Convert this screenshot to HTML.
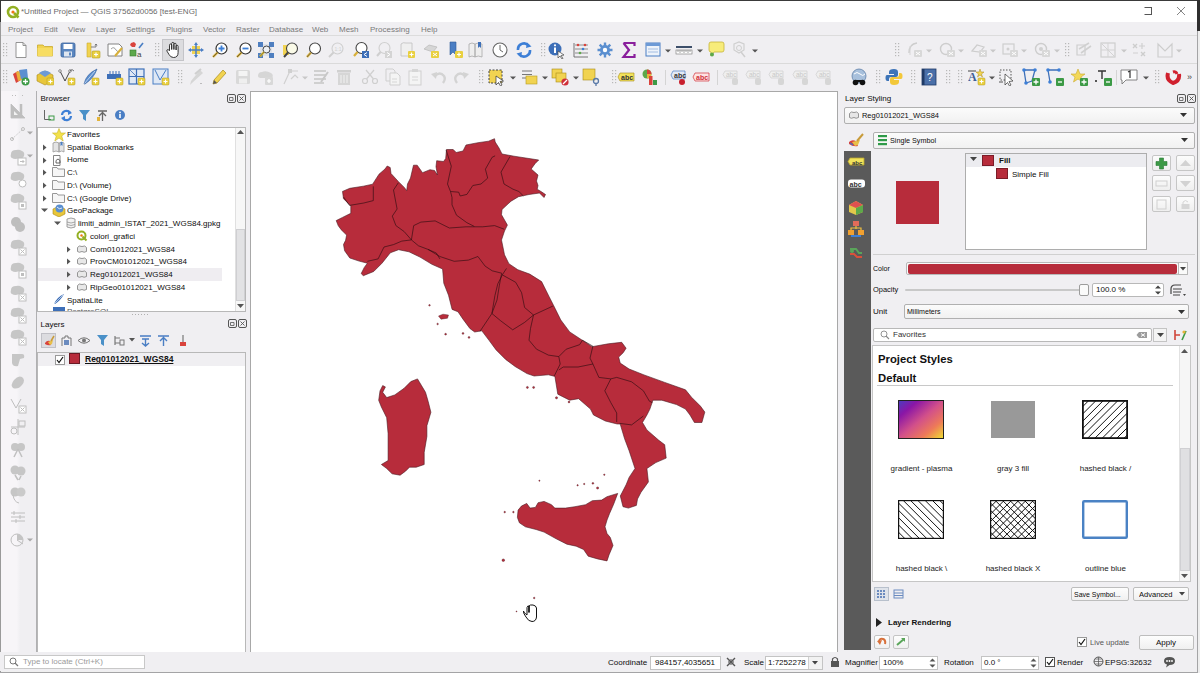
<!DOCTYPE html>
<html><head><meta charset="utf-8"><style>
*{margin:0;padding:0}
html,body{width:1200px;height:673px;overflow:hidden;background:#f0f0f0;position:relative}
body>div,body>svg{position:absolute}
.t{position:absolute;white-space:nowrap;line-height:12px;font-family:"Liberation Sans", sans-serif}
</style></head><body>
<div style="left:0px;top:0px;width:1200px;height:1px;background:#3a3a3a"></div>
<div style="left:0px;top:1px;width:1200px;height:21px;background:#ffffff"></div>
<svg style="position:absolute;left:6px;top:5px;" width="14" height="14" viewBox="0 0 14 14"><circle cx="7" cy="7" r="5" fill="none" stroke="#93b023" stroke-width="2.6"/><path d="M8 8 L12.5 12.5" stroke="#93b023" stroke-width="2.6"/><circle cx="7" cy="7" r="1.6" fill="#ee7913"/></svg>
<div class="t" style="left:21px;top:5.61px;font-size:8.0px;color:#6a6a6a;">*Untitled Project — QGIS 37562d0056 [test-ENG]</div>
<div style="left:1144px;top:7px;width:8px;height:8px;border:1px solid #555;box-sizing:border-box;border-left-color:#fff;width:8px"></div>
<svg style="position:absolute;left:1176px;top:6px;" width="10" height="10" viewBox="0 0 10 10"><path d="M1 1L9 9M9 1L1 9" stroke="#666" stroke-width="0.8"/></svg>
<div style="left:0px;top:22px;width:1200px;height:13px;background:#f0eff2"></div>
<div class="t" style="left:8px;top:23.51px;font-size:8.0px;color:#7a7a7a;">Project</div>
<div class="t" style="left:44px;top:23.51px;font-size:8.0px;color:#7a7a7a;">Edit</div>
<div class="t" style="left:68px;top:23.51px;font-size:8.0px;color:#7a7a7a;">View</div>
<div class="t" style="left:96px;top:23.51px;font-size:8.0px;color:#7a7a7a;">Layer</div>
<div class="t" style="left:126px;top:23.51px;font-size:8.0px;color:#7a7a7a;">Settings</div>
<div class="t" style="left:166px;top:23.51px;font-size:8.0px;color:#7a7a7a;">Plugins</div>
<div class="t" style="left:203px;top:23.51px;font-size:8.0px;color:#7a7a7a;">Vector</div>
<div class="t" style="left:236px;top:23.51px;font-size:8.0px;color:#7a7a7a;">Raster</div>
<div class="t" style="left:269px;top:23.51px;font-size:8.0px;color:#7a7a7a;">Database</div>
<div class="t" style="left:312px;top:23.51px;font-size:8.0px;color:#7a7a7a;">Web</div>
<div class="t" style="left:339px;top:23.51px;font-size:8.0px;color:#7a7a7a;">Mesh</div>
<div class="t" style="left:370px;top:23.51px;font-size:8.0px;color:#7a7a7a;">Processing</div>
<div class="t" style="left:421px;top:23.51px;font-size:8.0px;color:#7a7a7a;">Help</div>
<div style="left:0px;top:35px;width:1200px;height:1px;background:#dcdcdc"></div>
<div style="left:0px;top:36px;width:1200px;height:27px;background:#f0eff2"></div>
<div style="left:0px;top:63px;width:1200px;height:1px;background:#dadada"></div>
<div style="left:0px;top:64px;width:1200px;height:25px;background:#f0eff2"></div>
<div style="left:162px;top:39px;width:22px;height:22px;background:#dcdcdf;border:1px solid #c4c4c8;box-sizing:border-box"></div>
<svg style="position:absolute;left:12px;top:41px;" width="18" height="18" viewBox="0 0 18 18"><path d="M4 1.5H11L14 4.5V16.5H4Z" fill="#fff" stroke="#888" stroke-width="0.9"/><path d="M11 1.5V4.5H14" fill="none" stroke="#888" stroke-width="0.9"/></svg>
<svg style="position:absolute;left:36px;top:41px;" width="18" height="18" viewBox="0 0 18 18"><path d="M1.5 4H7L8.5 5.5H16.5V15H1.5Z" fill="#f1d351" stroke="#c9a92c" stroke-width="0.8"/><path d="M1.5 7H16.5V15H1.5Z" fill="#f7dd63"/></svg>
<svg style="position:absolute;left:59px;top:41px;" width="18" height="18" viewBox="0 0 18 18"><rect x="2" y="2" width="14" height="14" rx="1.5" fill="#5a86c0" stroke="#37619a" stroke-width="0.8"/><rect x="4.5" y="3" width="9" height="5" fill="#fff"/><rect x="5" y="10.5" width="8" height="5" fill="#dfe6f0"/><rect x="10" y="11.5" width="2" height="3" fill="#5a86c0"/></svg>
<svg style="position:absolute;left:84px;top:41px;" width="18" height="18" viewBox="0 0 18 18"><path d="M3 2H7V16H3Z" fill="#f1d351" stroke="#c9a92c" stroke-width="0.6"/><path d="M7 6H12V3M12 3L11 4.5M12 3L13 4.5" stroke="#666" fill="none" stroke-width="0.8"/><rect x="8" y="10" width="8" height="7" rx="1" fill="#e9d040" stroke="#b49a20" stroke-width="0.6"/><path d="M10 13.5H14M12 11.5V15.5" stroke="#fff" stroke-width="1.2"/></svg>
<svg style="position:absolute;left:106px;top:41px;" width="18" height="18" viewBox="0 0 18 18"><path d="M2 3H13L16 6V15H2Z" fill="#fff" stroke="#777" stroke-width="0.9"/><path d="M5 8Q8 5 10 9Q12 12 14 10" stroke="#888" fill="none" stroke-width="0.8"/><path d="M9 15L16 7" stroke="#d8b03a" stroke-width="2"/></svg>
<svg style="position:absolute;left:127px;top:41px;" width="18" height="18" viewBox="0 0 18 18"><path d="M4 2L7 1L9 3L8 6L5 6L3 4Z" fill="#d9433c"/><path d="M12 7L16 2" stroke="#4a7ec4" stroke-width="1.6"/><rect x="3" y="9" width="6" height="6" fill="#5da84a" stroke="#3a7a30" stroke-width="0.6"/><text x="10" y="16" font-size="8" font-family="Liberation Sans" fill="#444">a</text></svg>
<svg style="position:absolute;left:164px;top:41px;" width="18" height="18" viewBox="0 0 18 18"><path d="M5.5 9.5V4.2Q5.5 3 6.6 3Q7.7 3 7.7 4.2V8.5V2.6Q7.7 1.4 8.8 1.4Q9.9 1.4 9.9 2.6V8.5V3.4Q9.9 2.2 11 2.2Q12.1 2.2 12.1 3.4V9V5.4Q12.1 4.3 13.1 4.3Q14.1 4.3 14.1 5.4V11.5Q14.1 16.5 9.5 16.5Q6.5 16.5 5 13.5L3 10.2Q2.4 8.8 3.8 8.6Q4.7 8.5 5.5 9.8Z" fill="#fff" stroke="#222" stroke-width="0.9" stroke-linejoin="round"/></svg>
<svg style="position:absolute;left:187px;top:41px;" width="18" height="18" viewBox="0 0 18 18"><rect x="5" y="5" width="8" height="8" fill="#f1d351"/><path d="M9 1L11 4H7Z M9 17L11 14H7Z M1 9L4 7V11Z M17 9L14 7V11Z" fill="#4a7ec4"/><path d="M9 4V14M4 9H14" stroke="#4a7ec4" stroke-width="1.5"/></svg>
<svg style="position:absolute;left:211px;top:41px;" width="18" height="18" viewBox="0 0 18 18"><circle cx="10.5" cy="7.5" r="5.5" fill="#fff" stroke="#333" stroke-width="1.2"/><path d="M7.5 7.5H13.5M10.5 4.5V10.5" stroke="#3d7fd6" stroke-width="1.8"/><path d="M6.5 11.5L2 16" stroke="#d8b03a" stroke-width="2.4"/><path d="M6.5 11.5L2 16" stroke="#333" stroke-width="0.6"/></svg>
<svg style="position:absolute;left:235px;top:41px;" width="18" height="18" viewBox="0 0 18 18"><circle cx="10.5" cy="7.5" r="5.5" fill="#fff" stroke="#333" stroke-width="1.2"/><path d="M7.5 7.5H13.5" stroke="#3d7fd6" stroke-width="1.8"/><path d="M6.5 11.5L2 16" stroke="#d8b03a" stroke-width="2.4"/><path d="M6.5 11.5L2 16" stroke="#333" stroke-width="0.6"/></svg>
<svg style="position:absolute;left:257px;top:41px;" width="18" height="18" viewBox="0 0 18 18"><rect x="3" y="3" width="12" height="12" fill="#dfe3ea"/><path d="M1 1H6V6H1Z M12 1H17V6H12Z M1 12H6V17H1Z M12 12H17V17H12Z" fill="#4f7fc0"/><circle cx="9.5" cy="8.5" r="3.5" fill="#eef1f5" stroke="#333" stroke-width="0.9"/><path d="M7 11L3 15.5" stroke="#e3c23a" stroke-width="2.2"/><path d="M7 11L3 15.5" stroke="#333" stroke-width="0.5"/></svg>
<svg style="position:absolute;left:281px;top:41px;" width="18" height="18" viewBox="0 0 18 18"><rect x="2" y="4" width="6" height="10" fill="#f1d351"/><circle cx="11" cy="7.5" r="5.5" fill="#fafae8" stroke="#444" stroke-width="1.1"/><path d="M7 11.5L3 16" stroke="#444" stroke-width="2"/></svg>
<svg style="position:absolute;left:304px;top:41px;" width="18" height="18" viewBox="0 0 18 18"><circle cx="11" cy="7.5" r="5.5" fill="#fff" stroke="#444" stroke-width="1.1"/><path d="M7 11.5L3 16" stroke="#d8b03a" stroke-width="2.4"/><path d="M7 11.5L3 16" stroke="#444" stroke-width="0.6"/></svg>
<svg style="position:absolute;left:327px;top:41px;" width="18" height="18" viewBox="0 0 18 18"><circle cx="10.5" cy="7.5" r="5.5" fill="none" stroke="#cfcfcf" stroke-width="1.1"/><path d="M6.5 11.5L2 16" stroke="#cfcfcf" stroke-width="2"/><text x="7.5" y="10" font-size="5" fill="#cfcfcf" font-family="Liberation Sans">1:1</text></svg>
<svg style="position:absolute;left:352px;top:41px;" width="18" height="18" viewBox="0 0 18 18"><circle cx="9.5" cy="7" r="5.5" fill="#fff" stroke="#444" stroke-width="1.1"/><path d="M5.5 11L2 15" stroke="#d8b03a" stroke-width="2.2"/><rect x="10" y="10" width="7" height="7" fill="#3d6fb8"/><path d="M15 11.5L12 13.5L15 15.5" stroke="#fff" fill="none"/></svg>
<svg style="position:absolute;left:375px;top:41px;" width="18" height="18" viewBox="0 0 18 18"><circle cx="9.5" cy="7" r="5.5" fill="none" stroke="#cfcfcf" stroke-width="1.1"/><path d="M5.5 11L2 15" stroke="#cfcfcf" stroke-width="2"/><rect x="10" y="10" width="7" height="7" fill="#d4d4d4"/><path d="M12 11.5L15 13.5L12 15.5" stroke="#fff" fill="none"/></svg>
<svg style="position:absolute;left:398px;top:41px;" width="18" height="18" viewBox="0 0 18 18"><path d="M3 3Q5 1 8 2L14 2V15H3Z" fill="#efefef" stroke="#c4c4c4" stroke-width="0.9"/><rect x="10" y="10" width="7" height="7" rx="1" fill="#e9d040"/><path d="M11.5 13.5H15.5M13.5 11.5V15.5" stroke="#fff" stroke-width="1.2"/></svg>
<svg style="position:absolute;left:422px;top:41px;" width="18" height="18" viewBox="0 0 18 18"><path d="M2 8L7 4L15 6L11 11Z" fill="#d6d6d6" stroke="#bdbdbd" stroke-width="0.8"/><rect x="9" y="10" width="8" height="7" rx="1" fill="#e9d040"/><path d="M11 12L13 13.5L11 15M15 12L13 13.5L15 15" stroke="#fff" fill="none"/></svg>
<svg style="position:absolute;left:446px;top:41px;" width="18" height="18" viewBox="0 0 18 18"><path d="M4 1H10V14L7 11L4 14Z" fill="#4a7ec4"/><path d="M4 1H10V14L7 11L4 14Z" fill="none" stroke="#2f5a99" stroke-width="0.6"/><rect x="9" y="10" width="8" height="7" rx="1" fill="#e9d040"/><path d="M11 13.5H15M13 11.5V15.5" stroke="#fff" stroke-width="1.2"/></svg>
<svg style="position:absolute;left:467px;top:41px;" width="18" height="18" viewBox="0 0 18 18"><path d="M2 3Q5 1 8 3V16Q5 14 2 16Z M8 3Q11 1 15 3V16Q11 14 8 16Z" fill="#eeeeee" stroke="#a8a8a8" stroke-width="0.8"/><path d="M11 1V7L12.5 5.5L14 7V1Z" fill="#3d6fb8"/></svg>
<svg style="position:absolute;left:491px;top:41px;" width="18" height="18" viewBox="0 0 18 18"><circle cx="9" cy="9" r="7" fill="#fff" stroke="#666" stroke-width="1.1"/><path d="M9 4V9L12 11" stroke="#666" stroke-width="1" fill="none"/></svg>
<svg style="position:absolute;left:515px;top:41px;" width="18" height="18" viewBox="0 0 18 18"><path d="M3 9A6 6 0 0 1 13.5 4.5" stroke="#3d7fd6" stroke-width="2.6" fill="none"/><path d="M15 9A6 6 0 0 1 4.5 13.5" stroke="#3d7fd6" stroke-width="2.6" fill="none"/><path d="M12 1.5L16.5 5.5L11 7Z M6 16.5L1.5 12.5L7 11Z" fill="#3d7fd6"/></svg>
<svg style="position:absolute;left:547px;top:41px;" width="18" height="18" viewBox="0 0 18 18"><circle cx="8" cy="8" r="6.5" fill="#3d6fb8"/><rect x="7" y="6.5" width="2" height="5.5" fill="#fff"/><circle cx="8" cy="4.3" r="1.1" fill="#fff"/><path d="M11 10L11 17L13 15L15 18L16 17.5L14 14.5L17 14Z" fill="#fff" stroke="#444" stroke-width="0.7"/></svg>
<svg style="position:absolute;left:572px;top:41px;" width="18" height="18" viewBox="0 0 18 18"><path d="M2 2V16H16" stroke="#666" fill="none" stroke-width="0.9"/><path d="M3 4H16M3 8H16M3 12H16" stroke="#777" stroke-width="0.8"/><circle cx="6" cy="4" r="1.3" fill="#d9433c"/><circle cx="11" cy="8" r="1.3" fill="#3d7fd6"/><circle cx="8" cy="12" r="1.3" fill="#5da84a"/><circle cx="13" cy="4" r="1.3" fill="#d9433c"/></svg>
<svg style="position:absolute;left:596px;top:41px;" width="18" height="18" viewBox="0 0 18 18"><circle cx="9" cy="9" r="5" fill="#5b8fd0"/><path d="M9 1.5V16.5M1.5 9H16.5M3.7 3.7L14.3 14.3M14.3 3.7L3.7 14.3" stroke="#5b8fd0" stroke-width="2.4"/><circle cx="9" cy="9" r="2.2" fill="#fff"/></svg>
<svg style="position:absolute;left:620px;top:41px;" width="18" height="18" viewBox="0 0 18 18"><path d="M3.5 2H14.5V5M3.5 2L9 9L3.5 16H14.5V13" stroke="#8a1f9c" stroke-width="2.2" fill="none"/></svg>
<svg style="position:absolute;left:644px;top:41px;" width="18" height="18" viewBox="0 0 18 18"><rect x="2" y="2" width="14" height="13" fill="#eef3fa" stroke="#4a7ec4" stroke-width="1"/><rect x="2" y="2" width="14" height="3" fill="#6d9ad6"/><path d="M4 8H14M4 11H14" stroke="#9ab8e0" stroke-width="0.9"/></svg>
<svg style="position:absolute;left:675px;top:41px;" width="18" height="18" viewBox="0 0 18 18"><rect x="1" y="5" width="16" height="2" fill="#3d4f6a"/><rect x="1" y="9" width="16" height="4" fill="#fff" stroke="#888" stroke-width="0.7"/><path d="M3 9V11M5 9V12M7 9V11M9 9V12M11 9V11M13 9V12M15 9V11" stroke="#666" stroke-width="0.6"/></svg>
<svg style="position:absolute;left:707px;top:41px;" width="18" height="18" viewBox="0 0 18 18"><path d="M2 3Q2 1 4 1H15Q17 1 17 3V9Q17 11 15 11H7L4 15V11H4Q2 11 2 9Z" fill="#f7ec7a" stroke="#c7b53a" stroke-width="0.8"/><circle cx="5" cy="13.5" r="2" fill="#5da84a"/></svg>
<svg style="position:absolute;left:730px;top:41px;" width="18" height="18" viewBox="0 0 18 18"><path d="M4 3L9 1L14 3L14 9L9 12L4 9Z" fill="none" stroke="#cfcfcf" stroke-width="1.2"/><circle cx="9" cy="7" r="2.5" fill="none" stroke="#cfcfcf"/><path d="M11 11L15 16" stroke="#cfcfcf" stroke-width="1.5"/></svg>
<svg style="position:absolute;left:906px;top:41px;" width="18" height="18" viewBox="0 0 18 18"><path d="M3 12Q3 3 11 2" stroke="#cdcdcd" stroke-width="1.4" fill="none"/><path d="M4 14V5" stroke="#d5d5d5"/><rect x="8" y="9" width="8" height="7" rx="1" fill="#d8d8d8"/><path d="M10 11L14 14M14 11L10 14" stroke="#fff"/></svg>
<svg style="position:absolute;left:938px;top:41px;" width="18" height="18" viewBox="0 0 18 18"><circle cx="8" cy="8" r="5.5" fill="none" stroke="#cdcdcd" stroke-width="1.4"/><rect x="9" y="9" width="8" height="7" rx="1" fill="#d8d8d8"/><path d="M11 11L15 14M15 11L11 14" stroke="#fff"/></svg>
<svg style="position:absolute;left:970px;top:41px;" width="18" height="18" viewBox="0 0 18 18"><path d="M2 10L7 4L14 6L10 11Z" fill="none" stroke="#cdcdcd" stroke-width="1.2"/><rect x="9" y="9" width="8" height="7" rx="1" fill="#d8d8d8"/><path d="M11 11L15 14M15 11L11 14" stroke="#fff"/></svg>
<svg style="position:absolute;left:1001px;top:41px;" width="18" height="18" viewBox="0 0 18 18"><rect x="2" y="3" width="11" height="10" fill="none" stroke="#cdcdcd" stroke-width="1.2"/><circle cx="7" cy="8" r="1.5" fill="#d0d0d0"/><rect x="9" y="9" width="8" height="7" rx="1" fill="#d8d8d8"/><path d="M11 11L15 14M15 11L11 14" stroke="#fff"/></svg>
<svg style="position:absolute;left:1033px;top:41px;" width="18" height="18" viewBox="0 0 18 18"><circle cx="8" cy="8" r="5.5" fill="none" stroke="#cdcdcd" stroke-width="1.4"/><circle cx="8" cy="8" r="2" fill="#d0d0d0"/><rect x="9" y="9" width="8" height="7" rx="1" fill="#d8d8d8"/><path d="M11 11L15 14M15 11L11 14" stroke="#fff"/></svg>
<svg style="position:absolute;left:1075px;top:41px;" width="18" height="18" viewBox="0 0 18 18"><path d="M2 4H10V14H2Z" fill="none" stroke="#cdcdcd" stroke-width="1.2"/><path d="M4 8L14 2M6 12L16 5" stroke="#d0d0d0" stroke-width="1.6"/></svg>
<svg style="position:absolute;left:1099px;top:41px;" width="18" height="18" viewBox="0 0 18 18"><rect x="2" y="2" width="14" height="14" fill="none" stroke="#cdcdcd" stroke-width="1.2"/><path d="M2 9H16M9 2V16M2 2L16 16" stroke="#d3d3d3"/></svg>
<svg style="position:absolute;left:1130px;top:41px;" width="18" height="18" viewBox="0 0 18 18"><path d="M3 3L7 7M7 3L3 7M11 11L15 15M15 11L11 15" stroke="#cdcdcd" stroke-width="1.4"/><path d="M12 2V8M9 5H15M3 12H8" stroke="#d0d0d0" stroke-width="1.2"/></svg>
<svg style="position:absolute;left:1156px;top:41px;" width="18" height="18" viewBox="0 0 18 18"><path d="M2 16V3L9 10L16 3V16Z" fill="none" stroke="#cdcdcd" stroke-width="1.2"/></svg>
<svg style="position:absolute;left:3px;top:43px;" width="6" height="15" viewBox="0 0 6 15"><rect x="0" y="0" width="1.2" height="1.2" fill="#b8b8b8"/><rect x="0" y="3" width="1.2" height="1.2" fill="#b8b8b8"/><rect x="0" y="6" width="1.2" height="1.2" fill="#b8b8b8"/><rect x="0" y="9" width="1.2" height="1.2" fill="#b8b8b8"/><rect x="0" y="12" width="1.2" height="1.2" fill="#b8b8b8"/><rect x="3" y="0" width="1.2" height="1.2" fill="#b8b8b8"/><rect x="3" y="3" width="1.2" height="1.2" fill="#b8b8b8"/><rect x="3" y="6" width="1.2" height="1.2" fill="#b8b8b8"/><rect x="3" y="9" width="1.2" height="1.2" fill="#b8b8b8"/><rect x="3" y="12" width="1.2" height="1.2" fill="#b8b8b8"/></svg>
<svg style="position:absolute;left:155px;top:43px;" width="6" height="15" viewBox="0 0 6 15"><rect x="0" y="0" width="1.2" height="1.2" fill="#b8b8b8"/><rect x="0" y="3" width="1.2" height="1.2" fill="#b8b8b8"/><rect x="0" y="6" width="1.2" height="1.2" fill="#b8b8b8"/><rect x="0" y="9" width="1.2" height="1.2" fill="#b8b8b8"/><rect x="0" y="12" width="1.2" height="1.2" fill="#b8b8b8"/><rect x="3" y="0" width="1.2" height="1.2" fill="#b8b8b8"/><rect x="3" y="3" width="1.2" height="1.2" fill="#b8b8b8"/><rect x="3" y="6" width="1.2" height="1.2" fill="#b8b8b8"/><rect x="3" y="9" width="1.2" height="1.2" fill="#b8b8b8"/><rect x="3" y="12" width="1.2" height="1.2" fill="#b8b8b8"/></svg>
<svg style="position:absolute;left:540.5px;top:43px;" width="6" height="15" viewBox="0 0 6 15"><rect x="0" y="0" width="1.2" height="1.2" fill="#b8b8b8"/><rect x="0" y="3" width="1.2" height="1.2" fill="#b8b8b8"/><rect x="0" y="6" width="1.2" height="1.2" fill="#b8b8b8"/><rect x="0" y="9" width="1.2" height="1.2" fill="#b8b8b8"/><rect x="0" y="12" width="1.2" height="1.2" fill="#b8b8b8"/><rect x="3" y="0" width="1.2" height="1.2" fill="#b8b8b8"/><rect x="3" y="3" width="1.2" height="1.2" fill="#b8b8b8"/><rect x="3" y="6" width="1.2" height="1.2" fill="#b8b8b8"/><rect x="3" y="9" width="1.2" height="1.2" fill="#b8b8b8"/><rect x="3" y="12" width="1.2" height="1.2" fill="#b8b8b8"/></svg>
<svg style="position:absolute;left:894.5px;top:43px;" width="6" height="15" viewBox="0 0 6 15"><rect x="0" y="0" width="1.2" height="1.2" fill="#b8b8b8"/><rect x="0" y="3" width="1.2" height="1.2" fill="#b8b8b8"/><rect x="0" y="6" width="1.2" height="1.2" fill="#b8b8b8"/><rect x="0" y="9" width="1.2" height="1.2" fill="#b8b8b8"/><rect x="0" y="12" width="1.2" height="1.2" fill="#b8b8b8"/><rect x="3" y="0" width="1.2" height="1.2" fill="#b8b8b8"/><rect x="3" y="3" width="1.2" height="1.2" fill="#b8b8b8"/><rect x="3" y="6" width="1.2" height="1.2" fill="#b8b8b8"/><rect x="3" y="9" width="1.2" height="1.2" fill="#b8b8b8"/><rect x="3" y="12" width="1.2" height="1.2" fill="#b8b8b8"/></svg>
<svg style="position:absolute;left:1065px;top:43px;" width="6" height="15" viewBox="0 0 6 15"><rect x="0" y="0" width="1.2" height="1.2" fill="#b8b8b8"/><rect x="0" y="3" width="1.2" height="1.2" fill="#b8b8b8"/><rect x="0" y="6" width="1.2" height="1.2" fill="#b8b8b8"/><rect x="0" y="9" width="1.2" height="1.2" fill="#b8b8b8"/><rect x="0" y="12" width="1.2" height="1.2" fill="#b8b8b8"/><rect x="3" y="0" width="1.2" height="1.2" fill="#b8b8b8"/><rect x="3" y="3" width="1.2" height="1.2" fill="#b8b8b8"/><rect x="3" y="6" width="1.2" height="1.2" fill="#b8b8b8"/><rect x="3" y="9" width="1.2" height="1.2" fill="#b8b8b8"/><rect x="3" y="12" width="1.2" height="1.2" fill="#b8b8b8"/></svg>
<svg style="position:absolute;left:665px;top:49px;" width="7" height="5" viewBox="0 0 7 5"><path d="M0 0.5H6L3 3.5Z" fill="#555"/></svg>
<svg style="position:absolute;left:697px;top:49px;" width="7" height="5" viewBox="0 0 7 5"><path d="M0 0.5H6L3 3.5Z" fill="#555"/></svg>
<svg style="position:absolute;left:752px;top:49px;" width="7" height="5" viewBox="0 0 7 5"><path d="M0 0.5H6L3 3.5Z" fill="#555"/></svg>
<svg style="position:absolute;left:925.7px;top:49px;" width="7" height="5" viewBox="0 0 7 5"><path d="M0 0.5H6L3 3.5Z" fill="#c8c8c8"/></svg>
<svg style="position:absolute;left:958px;top:49px;" width="7" height="5" viewBox="0 0 7 5"><path d="M0 0.5H6L3 3.5Z" fill="#c8c8c8"/></svg>
<svg style="position:absolute;left:990.3px;top:49px;" width="7" height="5" viewBox="0 0 7 5"><path d="M0 0.5H6L3 3.5Z" fill="#c8c8c8"/></svg>
<svg style="position:absolute;left:1021px;top:49px;" width="7" height="5" viewBox="0 0 7 5"><path d="M0 0.5H6L3 3.5Z" fill="#c8c8c8"/></svg>
<svg style="position:absolute;left:1053.6px;top:49px;" width="7" height="5" viewBox="0 0 7 5"><path d="M0 0.5H6L3 3.5Z" fill="#c8c8c8"/></svg>
<svg style="position:absolute;left:1120.8px;top:49px;" width="7" height="5" viewBox="0 0 7 5"><path d="M0 0.5H6L3 3.5Z" fill="#c8c8c8"/></svg>
<svg style="position:absolute;left:1176.3px;top:49px;" width="7" height="5" viewBox="0 0 7 5"><path d="M0 0.5H6L3 3.5Z" fill="#c8c8c8"/></svg>
<svg style="position:absolute;left:12px;top:68px;" width="18" height="18" viewBox="0 0 18 18"><path d="M1 6L6 3L9 12L4 15Z" fill="#d9433c"/><path d="M4 4L11 2L13 11L6 13Z" fill="#e9b03a"/><path d="M7 2L15 1L16 10L9 11Z" fill="#5b8fd0"/><circle cx="13.5" cy="13.5" r="4" fill="#3c9a46"/><path d="M11 13.5H16M13.5 11V16" stroke="#fff" stroke-width="1.3"/></svg>
<svg style="position:absolute;left:36px;top:68px;" width="18" height="18" viewBox="0 0 18 18"><path d="M1 7L9 3L17 7V13L9 17L1 13Z" fill="#e8c63a" stroke="#a98a1a" stroke-width="0.6"/><path d="M3 5Q9 0 15 5L9 9Z" fill="#6d9ad6"/><rect x="11" y="10" width="7" height="7" rx="1" fill="#e9d040" stroke="#b49a20" stroke-width="0.5"/><path d="M12.5 13.5H16.5M14.5 11.5V15.5" stroke="#fff" stroke-width="1.1"/></svg>
<svg style="position:absolute;left:58px;top:68px;" width="18" height="18" viewBox="0 0 18 18"><path d="M2 3L7 13L12 3" stroke="#444" stroke-width="1" fill="none"/><circle cx="2" cy="3" r="1.3" fill="#fff" stroke="#444" stroke-width="0.6"/><circle cx="12" cy="3" r="1.3" fill="#fff" stroke="#444" stroke-width="0.6"/><path d="M12 3Q14 0 16 3" stroke="#444" fill="none" stroke-width="0.7"/><rect x="10" y="10" width="7" height="7" rx="1" fill="#e9d040" stroke="#b49a20" stroke-width="0.5"/><path d="M11.5 13.5H15.5M13.5 11.5V15.5" stroke="#fff" stroke-width="1.1"/></svg>
<svg style="position:absolute;left:82px;top:68px;" width="18" height="18" viewBox="0 0 18 18"><path d="M2 16Q4 6 15 1Q12 10 3 16Z" fill="#5b8fd0" stroke="#2f5a99" stroke-width="0.6"/><path d="M2.5 15.5L13 3" stroke="#fff" stroke-width="0.6"/><rect x="10" y="10" width="7" height="7" rx="1" fill="#e9d040" stroke="#b49a20" stroke-width="0.5"/><path d="M11.5 13.5H15.5M13.5 11.5V15.5" stroke="#fff" stroke-width="1.1"/></svg>
<svg style="position:absolute;left:106px;top:68px;" width="18" height="18" viewBox="0 0 18 18"><rect x="1" y="6" width="14" height="5" fill="#3d6fb8"/><path d="M4 3V6M7 3V6M10 3V6M13 3V6" stroke="#3d6fb8" stroke-width="1"/><rect x="10" y="10" width="7" height="7" rx="1" fill="#e9d040" stroke="#b49a20" stroke-width="0.5"/><path d="M11.5 13.5H15.5M13.5 11.5V15.5" stroke="#fff" stroke-width="1.1"/></svg>
<svg style="position:absolute;left:128px;top:68px;" width="18" height="18" viewBox="0 0 18 18"><rect x="1" y="1" width="15" height="15" fill="#dfe8f5" stroke="#3d6fb8" stroke-width="1.2"/><path d="M1 8.5H16M8.5 1V16" stroke="#3d6fb8" stroke-width="1.2"/><path d="M2 2L8 8" stroke="#3d6fb8" stroke-width="0.8"/><rect x="10" y="10" width="7" height="7" rx="1" fill="#e9d040" stroke="#b49a20" stroke-width="0.5"/><path d="M11.5 13.5H15.5M13.5 11.5V15.5" stroke="#fff" stroke-width="1.1"/></svg>
<svg style="position:absolute;left:152px;top:68px;" width="18" height="18" viewBox="0 0 18 18"><rect x="1" y="1" width="15" height="15" fill="#dfe8f5" stroke="#4a7ec4" stroke-width="1"/><path d="M3 2L8 12L14 2" stroke="#4a7ec4" stroke-width="1" fill="none"/><rect x="10" y="10" width="7" height="7" rx="1" fill="#e9d040" stroke="#b49a20" stroke-width="0.5"/><path d="M11.5 13.5H15.5M13.5 11.5V15.5" stroke="#fff" stroke-width="1.1"/></svg>
<svg style="position:absolute;left:188px;top:68px;" width="18" height="18" viewBox="0 0 18 18"><path d="M4 15L2 17L3 13L12 2L15 5Z" fill="#d6d6d6"/><path d="M7 6L13 1" stroke="#cfcfcf" stroke-width="2"/><path d="M12 15L14 15L13 16Z" fill="#888"/></svg>
<svg style="position:absolute;left:210px;top:68px;" width="18" height="18" viewBox="0 0 18 18"><path d="M3 16L4 12L13 2L16 5L7 15Z" fill="#f1d351" stroke="#a98a1a" stroke-width="0.7"/><path d="M3 16L4 12L7 15Z" fill="#555"/></svg>
<svg style="position:absolute;left:234px;top:68px;" width="18" height="18" viewBox="0 0 18 18"><rect x="2" y="2" width="14" height="14" rx="1.5" fill="#d9d9d9"/><rect x="4.5" y="3" width="9" height="5" fill="#f4f4f4"/><rect x="5" y="10.5" width="8" height="5" fill="#efefef"/></svg>
<svg style="position:absolute;left:257px;top:68px;" width="18" height="18" viewBox="0 0 18 18"><path d="M1 8Q1 4 5 4Q9 2 14 5Q17 7 15 10L5 10Q1 10 1 8Z" fill="#d6d6d6"/><rect x="8" y="9" width="8" height="8" rx="1" fill="#d8d8d8"/><path d="M10 13H14M12 11V15" stroke="#fff" stroke-width="1.2"/></svg>
<svg style="position:absolute;left:282px;top:68px;" width="18" height="18" viewBox="0 0 18 18"><path d="M2 16L8 3M8 3L16 3" stroke="#d0d0d0" stroke-width="1.2"/><rect x="6" y="1" width="4" height="4" fill="#d0d0d0"/><path d="M9 11L13 7L16 10" stroke="#d0d0d0" stroke-width="1.2" fill="none"/></svg>
<svg style="position:absolute;left:312px;top:68px;" width="18" height="18" viewBox="0 0 18 18"><path d="M2 3H14M2 7H14M2 11H14M2 15H12" stroke="#d0d0d0" stroke-width="2"/><path d="M9 14L16 4" stroke="#c8c8c8" stroke-width="2"/></svg>
<svg style="position:absolute;left:335px;top:68px;" width="18" height="18" viewBox="0 0 18 18"><rect x="3" y="5" width="12" height="12" fill="#d6d6d6"/><rect x="2" y="2" width="14" height="2.5" fill="#d0d0d0"/><path d="M6 7V15M9 7V15M12 7V15" stroke="#f2f2f2"/></svg>
<svg style="position:absolute;left:361px;top:68px;" width="18" height="18" viewBox="0 0 18 18"><circle cx="4" cy="13" r="2.5" fill="none" stroke="#cfcfcf" stroke-width="1.2"/><circle cx="14" cy="13" r="2.5" fill="none" stroke="#cfcfcf" stroke-width="1.2"/><path d="M5.5 11L13 2M12.5 11L5 2" stroke="#cfcfcf" stroke-width="1.2"/></svg>
<svg style="position:absolute;left:384px;top:68px;" width="18" height="18" viewBox="0 0 18 18"><path d="M6 5H13L16 8V17H6Z" fill="#f4f4f4" stroke="#cfcfcf"/><path d="M2 1H9L11 3V5M2 1V13H6" stroke="#cfcfcf" fill="none"/><path d="M8 11H13M8 14H13" stroke="#d6d6d6"/></svg>
<svg style="position:absolute;left:406px;top:68px;" width="18" height="18" viewBox="0 0 18 18"><rect x="3" y="3" width="12" height="14" fill="#f4f4f4" stroke="#cfcfcf"/><rect x="6" y="1" width="6" height="3" fill="#d6d6d6"/><path d="M6 9H12M6 12H12" stroke="#d6d6d6"/></svg>
<svg style="position:absolute;left:430px;top:68px;" width="18" height="18" viewBox="0 0 18 18"><path d="M5 8Q10 3 14 8Q16 11 13 15" stroke="#d3d3d3" stroke-width="2.4" fill="none"/><path d="M1 6L7 4L6 11Z" fill="#d3d3d3"/></svg>
<svg style="position:absolute;left:452px;top:68px;" width="18" height="18" viewBox="0 0 18 18"><path d="M13 8Q8 3 4 8Q2 11 5 15" stroke="#d3d3d3" stroke-width="2.4" fill="none"/><path d="M17 6L11 4L12 11Z" fill="#d3d3d3"/></svg>
<svg style="position:absolute;left:487px;top:68px;" width="18" height="18" viewBox="0 0 18 18"><rect x="2" y="2" width="13" height="13" fill="#f1d351" stroke="#444" stroke-width="1" stroke-dasharray="2 1.5"/><path d="M9 8L9 17L11.5 14.5L13.5 18L15 17L13 13.5L16.5 13Z" fill="#fff" stroke="#333" stroke-width="0.7"/></svg>
<svg style="position:absolute;left:520px;top:68px;" width="18" height="18" viewBox="0 0 18 18"><path d="M2 3H12M2 6.5H12M2 10H12" stroke="#777" stroke-width="1.2"/><rect x="6" y="8" width="11" height="8" fill="#f1d351" stroke="#b49a20" stroke-width="0.6"/></svg>
<svg style="position:absolute;left:551px;top:68px;" width="18" height="18" viewBox="0 0 18 18"><rect x="1" y="1" width="10" height="9" fill="#f1d351" stroke="#a98a1a" stroke-width="0.6"/><rect x="5" y="5" width="10" height="9" fill="#f1d351" stroke="#a98a1a" stroke-width="0.6"/><circle cx="14" cy="14" r="3.6" fill="#d0303a"/><path d="M12 16L16 12" stroke="#fff" stroke-width="1.2"/></svg>
<svg style="position:absolute;left:582px;top:68px;" width="18" height="18" viewBox="0 0 18 18"><rect x="1" y="1" width="12" height="11" fill="#f1d351" stroke="#a98a1a" stroke-width="0.6"/><circle cx="14" cy="13" r="2.5" fill="none" stroke="#5a7aa8" stroke-width="1.3"/><path d="M14 15.5V18" stroke="#5a7aa8" stroke-width="1.3"/></svg>
<svg style="position:absolute;left:617px;top:68px;" width="18" height="18" viewBox="0 0 18 18"><path d="M3 5H17V13H3L1 9Z" fill="#f1e25a" stroke="#a98a1a" stroke-width="0.6"/><text x="4" y="11.8" font-size="7" font-weight="bold" font-family="Liberation Sans" fill="#333">abc</text></svg>
<svg style="position:absolute;left:641px;top:68px;" width="18" height="18" viewBox="0 0 18 18"><circle cx="6" cy="6" r="4.5" fill="#5da84a"/><path d="M6 1.5A4.5 4.5 0 0 1 10.5 6L6 6Z" fill="#d9433c"/><path d="M6 6L10.5 6A4.5 4.5 0 0 1 6 10.5Z" fill="#e9b03a"/><rect x="8" y="8" width="3.5" height="9" fill="#d9433c"/><rect x="12" y="12" width="4" height="5" fill="#3c9a46"/></svg>
<svg style="position:absolute;left:670px;top:68px;" width="18" height="18" viewBox="0 0 18 18"><path d="M3 3H15V11H3L1 7Z" fill="#e2eaf6" stroke="#4a7ec4" stroke-width="0.7"/><text x="4" y="9.8" font-size="7" font-weight="bold" font-family="Liberation Sans" fill="#333">abc</text><circle cx="12" cy="14" r="3" fill="#c8202e"/></svg>
<svg style="position:absolute;left:692px;top:68px;" width="18" height="18" viewBox="0 0 18 18"><path d="M3 5H17V13H3L1 9Z" fill="#fde3e3" stroke="#d0303a" stroke-width="0.7"/><text x="4" y="11.8" font-size="7" font-weight="bold" font-family="Liberation Sans" fill="#d0303a">abc</text></svg>
<svg style="position:absolute;left:722px;top:68px;" width="18" height="18" viewBox="0 0 18 18"><path d="M3 3H15V10H3L1 6.5Z" fill="#efefef" stroke="#cfcfcf" stroke-width="0.7"/><text x="4" y="9" font-size="6.5" font-family="Liberation Sans" fill="#c8c8c8">abc</text><rect x="10" y="10" width="6" height="7" rx="2" fill="#d6d6d6"/></svg>
<svg style="position:absolute;left:745px;top:68px;" width="18" height="18" viewBox="0 0 18 18"><path d="M3 3H15V10H3L1 6.5Z" fill="#efefef" stroke="#cfcfcf" stroke-width="0.7"/><text x="4" y="9" font-size="6.5" font-family="Liberation Sans" fill="#c8c8c8">abc</text><rect x="10" y="10" width="6" height="7" rx="2" fill="#d6d6d6"/></svg>
<svg style="position:absolute;left:768px;top:68px;" width="18" height="18" viewBox="0 0 18 18"><path d="M3 3H15V10H3L1 6.5Z" fill="#efefef" stroke="#cfcfcf" stroke-width="0.7"/><text x="4" y="9" font-size="6.5" font-family="Liberation Sans" fill="#c8c8c8">abc</text><rect x="10" y="10" width="6" height="7" rx="2" fill="#d6d6d6"/></svg>
<svg style="position:absolute;left:792px;top:68px;" width="18" height="18" viewBox="0 0 18 18"><path d="M3 3H15V10H3L1 6.5Z" fill="#efefef" stroke="#cfcfcf" stroke-width="0.7"/><text x="4" y="9" font-size="6.5" font-family="Liberation Sans" fill="#c8c8c8">abc</text><rect x="10" y="10" width="6" height="7" rx="2" fill="#d6d6d6"/></svg>
<svg style="position:absolute;left:815px;top:68px;" width="18" height="18" viewBox="0 0 18 18"><path d="M3 3H15V10H3L1 6.5Z" fill="#efefef" stroke="#cfcfcf" stroke-width="0.7"/><text x="4" y="9" font-size="6.5" font-family="Liberation Sans" fill="#c8c8c8">abc</text><rect x="10" y="10" width="6" height="7" rx="2" fill="#d6d6d6"/></svg>
<svg style="position:absolute;left:850px;top:68px;" width="18" height="18" viewBox="0 0 18 18"><circle cx="9" cy="8" r="7" fill="#a8c0dc" stroke="#6080a8" stroke-width="0.8"/><path d="M4 6Q7 3 10 6Q13 9 15 6" stroke="#fff" fill="none"/><circle cx="5.5" cy="14.5" r="2.8" fill="#111"/><circle cx="12.5" cy="14.5" r="2.8" fill="#111"/><rect x="6" y="12" width="6" height="2" fill="#111"/></svg>
<svg style="position:absolute;left:885px;top:68px;" width="18" height="18" viewBox="0 0 18 18"><path d="M9 1Q4 1 4 4V6H9V7H2Q0.5 7 0.5 10Q0.5 13 2.5 13H4V11Q4 9 6 9H11Q13 9 13 7V4Q13 1 9 1Z" fill="#3d74b8"/><path d="M9 17Q14 17 14 14V12H9V11H16Q17.5 11 17.5 8Q17.5 5 15.5 5H14V7Q14 9 12 9H7Q5 9 5 11V14Q5 17 9 17Z" fill="#f3c83a"/></svg>
<svg style="position:absolute;left:920px;top:68px;" width="18" height="18" viewBox="0 0 18 18"><rect x="2" y="1" width="14" height="16" fill="#4a6fa8" stroke="#1f3a66" stroke-width="0.8"/><rect x="2" y="1" width="2.5" height="16" fill="#1f3a66"/><text x="7" y="13" font-size="10" font-family="Liberation Sans" fill="#fff">?</text></svg>
<svg style="position:absolute;left:968px;top:68px;" width="18" height="18" viewBox="0 0 18 18"><text x="0" y="13" font-size="12" font-family="Liberation Serif" fill="#3d5f96" font-weight="bold">A</text><path d="M0 3H8" stroke="#444"/><path d="M12 1L13 4H16L13.5 6L14.5 9L12 7L9.5 9L10.5 6L8 4H11Z" fill="#f1d351" stroke="#a98a1a" stroke-width="0.5"/><rect x="10" y="10" width="7" height="7" rx="1" fill="#e9d040" stroke="#b49a20" stroke-width="0.5"/><path d="M11.5 13.5H15.5M13.5 11.5V15.5" stroke="#fff" stroke-width="1.1"/></svg>
<svg style="position:absolute;left:998px;top:68px;" width="18" height="18" viewBox="0 0 18 18"><rect x="2" y="2" width="11" height="10" fill="none" stroke="#555" stroke-dasharray="1.5 1.5"/><path d="M7 6L7 17L9.5 14.5L11.5 18L13 17L11 13.5L15 13Z" fill="#fff" stroke="#333" stroke-width="0.7"/><path d="M1 14H5" stroke="#555"/></svg>
<svg style="position:absolute;left:1022px;top:68px;" width="18" height="18" viewBox="0 0 18 18"><path d="M2 2L13 2L10 13L4 15Z" fill="none" stroke="#3d6fb8" stroke-width="1.3"/><circle cx="2" cy="2" r="1.8" fill="#3d7fd6"/><circle cx="13" cy="2" r="1.8" fill="#3d7fd6"/><circle cx="4" cy="15" r="1.8" fill="#3d7fd6"/><rect x="10" y="10" width="8" height="8" rx="1" fill="#3c9a46"/><path d="M11.5 14H16.5M14 11.5V16.5" stroke="#fff" stroke-width="1.3"/></svg>
<svg style="position:absolute;left:1046px;top:68px;" width="18" height="18" viewBox="0 0 18 18"><path d="M2 2L13 2M2 2L4 14" fill="none" stroke="#3d6fb8" stroke-width="1.3"/><circle cx="2" cy="2" r="1.8" fill="#3d7fd6"/><circle cx="13" cy="2" r="1.8" fill="#3d7fd6"/><circle cx="4" cy="14" r="1.8" fill="#3d7fd6"/><rect x="10" y="10" width="8" height="8" rx="1" fill="#3c9a46"/><path d="M12 14H16" stroke="#fff" stroke-width="1.3"/></svg>
<svg style="position:absolute;left:1070px;top:68px;" width="18" height="18" viewBox="0 0 18 18"><path d="M8 1L10 6H15L11 9L12.5 14L8 11L3.5 14L5 9L1 6H6Z" fill="#f3d85a" stroke="#c9a92c" stroke-width="0.6"/><rect x="10" y="10" width="8" height="8" rx="1" fill="#3c9a46"/><path d="M11.5 14H16.5M14 11.5V16.5" stroke="#fff" stroke-width="1.3"/></svg>
<svg style="position:absolute;left:1094px;top:68px;" width="18" height="18" viewBox="0 0 18 18"><path d="M4 3H12M8 3V11" stroke="#333" stroke-width="1.4"/><rect x="1" y="12" width="2" height="2" fill="#555"/><rect x="10" y="10" width="8" height="8" rx="1" fill="#3c9a46"/><path d="M12 14H16" stroke="#fff" stroke-width="1.3"/></svg>
<svg style="position:absolute;left:1120px;top:68px;" width="18" height="18" viewBox="0 0 18 18"><path d="M1 2H17V12H6L2 16V12H1Z" fill="#fff" stroke="#777" stroke-width="0.9"/><path d="M8 4L10 3V10" stroke="#333" stroke-width="1.2" fill="none"/></svg>
<svg style="position:absolute;left:1164px;top:68px;" width="18" height="18" viewBox="0 0 18 18"><path d="M4 5Q2 12 9 15Q16 13 15 6" stroke="#d0202e" stroke-width="4" fill="none"/><path d="M9 4Q12 3 13 6" stroke="#d0202e" stroke-width="3" fill="none"/></svg>
<svg style="position:absolute;left:3px;top:70px;" width="6" height="15" viewBox="0 0 6 15"><rect x="0" y="0" width="1.2" height="1.2" fill="#b8b8b8"/><rect x="0" y="3" width="1.2" height="1.2" fill="#b8b8b8"/><rect x="0" y="6" width="1.2" height="1.2" fill="#b8b8b8"/><rect x="0" y="9" width="1.2" height="1.2" fill="#b8b8b8"/><rect x="0" y="12" width="1.2" height="1.2" fill="#b8b8b8"/><rect x="3" y="0" width="1.2" height="1.2" fill="#b8b8b8"/><rect x="3" y="3" width="1.2" height="1.2" fill="#b8b8b8"/><rect x="3" y="6" width="1.2" height="1.2" fill="#b8b8b8"/><rect x="3" y="9" width="1.2" height="1.2" fill="#b8b8b8"/><rect x="3" y="12" width="1.2" height="1.2" fill="#b8b8b8"/></svg>
<svg style="position:absolute;left:178px;top:70px;" width="6" height="15" viewBox="0 0 6 15"><rect x="0" y="0" width="1.2" height="1.2" fill="#b8b8b8"/><rect x="0" y="3" width="1.2" height="1.2" fill="#b8b8b8"/><rect x="0" y="6" width="1.2" height="1.2" fill="#b8b8b8"/><rect x="0" y="9" width="1.2" height="1.2" fill="#b8b8b8"/><rect x="0" y="12" width="1.2" height="1.2" fill="#b8b8b8"/><rect x="3" y="0" width="1.2" height="1.2" fill="#b8b8b8"/><rect x="3" y="3" width="1.2" height="1.2" fill="#b8b8b8"/><rect x="3" y="6" width="1.2" height="1.2" fill="#b8b8b8"/><rect x="3" y="9" width="1.2" height="1.2" fill="#b8b8b8"/><rect x="3" y="12" width="1.2" height="1.2" fill="#b8b8b8"/></svg>
<svg style="position:absolute;left:479px;top:70px;" width="6" height="15" viewBox="0 0 6 15"><rect x="0" y="0" width="1.2" height="1.2" fill="#b8b8b8"/><rect x="0" y="3" width="1.2" height="1.2" fill="#b8b8b8"/><rect x="0" y="6" width="1.2" height="1.2" fill="#b8b8b8"/><rect x="0" y="9" width="1.2" height="1.2" fill="#b8b8b8"/><rect x="0" y="12" width="1.2" height="1.2" fill="#b8b8b8"/><rect x="3" y="0" width="1.2" height="1.2" fill="#b8b8b8"/><rect x="3" y="3" width="1.2" height="1.2" fill="#b8b8b8"/><rect x="3" y="6" width="1.2" height="1.2" fill="#b8b8b8"/><rect x="3" y="9" width="1.2" height="1.2" fill="#b8b8b8"/><rect x="3" y="12" width="1.2" height="1.2" fill="#b8b8b8"/></svg>
<svg style="position:absolute;left:612px;top:70px;" width="6" height="15" viewBox="0 0 6 15"><rect x="0" y="0" width="1.2" height="1.2" fill="#b8b8b8"/><rect x="0" y="3" width="1.2" height="1.2" fill="#b8b8b8"/><rect x="0" y="6" width="1.2" height="1.2" fill="#b8b8b8"/><rect x="0" y="9" width="1.2" height="1.2" fill="#b8b8b8"/><rect x="0" y="12" width="1.2" height="1.2" fill="#b8b8b8"/><rect x="3" y="0" width="1.2" height="1.2" fill="#b8b8b8"/><rect x="3" y="3" width="1.2" height="1.2" fill="#b8b8b8"/><rect x="3" y="6" width="1.2" height="1.2" fill="#b8b8b8"/><rect x="3" y="9" width="1.2" height="1.2" fill="#b8b8b8"/><rect x="3" y="12" width="1.2" height="1.2" fill="#b8b8b8"/></svg>
<svg style="position:absolute;left:875.5px;top:70px;" width="6" height="15" viewBox="0 0 6 15"><rect x="0" y="0" width="1.2" height="1.2" fill="#b8b8b8"/><rect x="0" y="3" width="1.2" height="1.2" fill="#b8b8b8"/><rect x="0" y="6" width="1.2" height="1.2" fill="#b8b8b8"/><rect x="0" y="9" width="1.2" height="1.2" fill="#b8b8b8"/><rect x="0" y="12" width="1.2" height="1.2" fill="#b8b8b8"/><rect x="3" y="0" width="1.2" height="1.2" fill="#b8b8b8"/><rect x="3" y="3" width="1.2" height="1.2" fill="#b8b8b8"/><rect x="3" y="6" width="1.2" height="1.2" fill="#b8b8b8"/><rect x="3" y="9" width="1.2" height="1.2" fill="#b8b8b8"/><rect x="3" y="12" width="1.2" height="1.2" fill="#b8b8b8"/></svg>
<svg style="position:absolute;left:911px;top:70px;" width="6" height="15" viewBox="0 0 6 15"><rect x="0" y="0" width="1.2" height="1.2" fill="#b8b8b8"/><rect x="0" y="3" width="1.2" height="1.2" fill="#b8b8b8"/><rect x="0" y="6" width="1.2" height="1.2" fill="#b8b8b8"/><rect x="0" y="9" width="1.2" height="1.2" fill="#b8b8b8"/><rect x="0" y="12" width="1.2" height="1.2" fill="#b8b8b8"/><rect x="3" y="0" width="1.2" height="1.2" fill="#b8b8b8"/><rect x="3" y="3" width="1.2" height="1.2" fill="#b8b8b8"/><rect x="3" y="6" width="1.2" height="1.2" fill="#b8b8b8"/><rect x="3" y="9" width="1.2" height="1.2" fill="#b8b8b8"/><rect x="3" y="12" width="1.2" height="1.2" fill="#b8b8b8"/></svg>
<svg style="position:absolute;left:946px;top:70px;" width="6" height="15" viewBox="0 0 6 15"><rect x="0" y="0" width="1.2" height="1.2" fill="#b8b8b8"/><rect x="0" y="3" width="1.2" height="1.2" fill="#b8b8b8"/><rect x="0" y="6" width="1.2" height="1.2" fill="#b8b8b8"/><rect x="0" y="9" width="1.2" height="1.2" fill="#b8b8b8"/><rect x="0" y="12" width="1.2" height="1.2" fill="#b8b8b8"/><rect x="3" y="0" width="1.2" height="1.2" fill="#b8b8b8"/><rect x="3" y="3" width="1.2" height="1.2" fill="#b8b8b8"/><rect x="3" y="6" width="1.2" height="1.2" fill="#b8b8b8"/><rect x="3" y="9" width="1.2" height="1.2" fill="#b8b8b8"/><rect x="3" y="12" width="1.2" height="1.2" fill="#b8b8b8"/></svg>
<svg style="position:absolute;left:958px;top:70px;" width="6" height="15" viewBox="0 0 6 15"><rect x="0" y="0" width="1.2" height="1.2" fill="#b8b8b8"/><rect x="0" y="3" width="1.2" height="1.2" fill="#b8b8b8"/><rect x="0" y="6" width="1.2" height="1.2" fill="#b8b8b8"/><rect x="0" y="9" width="1.2" height="1.2" fill="#b8b8b8"/><rect x="0" y="12" width="1.2" height="1.2" fill="#b8b8b8"/><rect x="3" y="0" width="1.2" height="1.2" fill="#b8b8b8"/><rect x="3" y="3" width="1.2" height="1.2" fill="#b8b8b8"/><rect x="3" y="6" width="1.2" height="1.2" fill="#b8b8b8"/><rect x="3" y="9" width="1.2" height="1.2" fill="#b8b8b8"/><rect x="3" y="12" width="1.2" height="1.2" fill="#b8b8b8"/></svg>
<svg style="position:absolute;left:1155.4px;top:70px;" width="6" height="15" viewBox="0 0 6 15"><rect x="0" y="0" width="1.2" height="1.2" fill="#b8b8b8"/><rect x="0" y="3" width="1.2" height="1.2" fill="#b8b8b8"/><rect x="0" y="6" width="1.2" height="1.2" fill="#b8b8b8"/><rect x="0" y="9" width="1.2" height="1.2" fill="#b8b8b8"/><rect x="0" y="12" width="1.2" height="1.2" fill="#b8b8b8"/><rect x="3" y="0" width="1.2" height="1.2" fill="#b8b8b8"/><rect x="3" y="3" width="1.2" height="1.2" fill="#b8b8b8"/><rect x="3" y="6" width="1.2" height="1.2" fill="#b8b8b8"/><rect x="3" y="9" width="1.2" height="1.2" fill="#b8b8b8"/><rect x="3" y="12" width="1.2" height="1.2" fill="#b8b8b8"/></svg>
<svg style="position:absolute;left:509.5px;top:76px;" width="7" height="5" viewBox="0 0 7 5"><path d="M0 0.5H6L3 3.5Z" fill="#555"/></svg>
<svg style="position:absolute;left:542px;top:76px;" width="7" height="5" viewBox="0 0 7 5"><path d="M0 0.5H6L3 3.5Z" fill="#555"/></svg>
<svg style="position:absolute;left:573px;top:76px;" width="7" height="5" viewBox="0 0 7 5"><path d="M0 0.5H6L3 3.5Z" fill="#555"/></svg>
<svg style="position:absolute;left:989px;top:76px;" width="7" height="5" viewBox="0 0 7 5"><path d="M0 0.5H6L3 3.5Z" fill="#555"/></svg>
<svg style="position:absolute;left:1142.7px;top:76px;" width="7" height="5" viewBox="0 0 7 5"><path d="M0 0.5H6L3 3.5Z" fill="#555"/></svg>
<svg style="position:absolute;left:302px;top:76px;" width="7" height="5" viewBox="0 0 7 5"><path d="M0 0.5H6L3 3.5Z" fill="#c8c8c8"/></svg>
<div style="left:665px;top:70px;width:1px;height:15px;background:#d4d4d4"></div>
<div style="left:717px;top:70px;width:1px;height:15px;background:#d4d4d4"></div>
<div style="left:1116px;top:70px;width:1px;height:15px;background:#d4d4d4"></div>
<div class="t" style="left:1187px;top:71.12px;font-size:9px;color:#444;">»</div>
<div style="left:0px;top:89px;width:1200px;height:563px;background:#f0eff2"></div>
<div style="left:1px;top:91px;width:35px;height:561px;background:linear-gradient(90deg,#f7f5f8 0,#f7f5f8 45%,#f0eff2 55%)"></div>
<div style="left:36px;top:91px;width:1px;height:561px;background:#b0b0b2"></div>
<svg style="position:absolute;left:9px;top:102px;" width="18" height="18" viewBox="0 0 18 18"><path d="M2 16V2L16 16Z" fill="#bebebe" stroke="#bdbdbd" stroke-width="0.8"/><path d="M5 13V9L9 13Z" fill="#f2f2f2"/><path d="M12 2V14" stroke="#bebebe" stroke-width="2.5"/></svg>
<svg style="position:absolute;left:9px;top:125px;" width="18" height="18" viewBox="0 0 18 18"><path d="M3 14L14 4" stroke="#c4c4c4" stroke-dasharray="1.5 1.5"/><circle cx="3" cy="14" r="1.5" fill="none" stroke="#bebebe"/><circle cx="14" cy="4" r="1.5" fill="none" stroke="#bebebe"/></svg>
<svg style="position:absolute;left:9px;top:148px;" width="18" height="18" viewBox="0 0 18 18"><path d="M2 6Q2 2 7 2Q10 1 13 3Q16 4 15 8Q14 11 10 10Q6 12 3 10Q1 9 2 6Z" fill="#c6c6c6"/><rect x="9" y="10" width="8" height="7" fill="#fff" stroke="#bebebe"/><path d="M11 13.5H15M13.5 12L15 13.5L13.5 15" stroke="#bebebe" fill="none"/></svg>
<svg style="position:absolute;left:9px;top:170px;" width="18" height="18" viewBox="0 0 18 18"><path d="M2 6Q2 2 7 2Q10 1 13 3Q16 4 15 8Q14 11 10 10Q6 12 3 10Q1 9 2 6Z" fill="#c6c6c6"/><circle cx="13.5" cy="13.5" r="3.5" fill="#fff" stroke="#bebebe"/></svg>
<svg style="position:absolute;left:9px;top:192px;" width="18" height="18" viewBox="0 0 18 18"><path d="M2 6Q2 2 7 2Q10 1 13 3Q16 4 15 8Q14 11 10 10Q6 12 3 10Q1 9 2 6Z" fill="#c6c6c6"/><rect x="10" y="10" width="7" height="7" fill="#fff" stroke="#bebebe"/><rect x="12" y="12" width="3" height="3" fill="#bebebe"/></svg>
<svg style="position:absolute;left:9px;top:216px;" width="18" height="18" viewBox="0 0 18 18"><circle cx="7" cy="6" r="5" fill="#bebebe"/><circle cx="11" cy="11" r="5" fill="#bebebe"/></svg>
<svg style="position:absolute;left:9px;top:238px;" width="18" height="18" viewBox="0 0 18 18"><path d="M2 6Q2 2 7 2Q10 1 13 3Q16 4 15 8Q14 11 10 10Q6 12 3 10Q1 9 2 6Z" fill="#c6c6c6"/><rect x="10" y="10" width="7" height="7" fill="#fff" stroke="#bebebe"/><path d="M11.5 11.5L15.5 15.5M15.5 11.5L11.5 15.5" stroke="#bebebe"/></svg>
<svg style="position:absolute;left:9px;top:261px;" width="18" height="18" viewBox="0 0 18 18"><path d="M2 6Q2 2 7 2Q10 1 13 3Q16 4 15 8Q14 11 10 10Q6 12 3 10Q1 9 2 6Z" fill="#c6c6c6"/><rect x="10" y="10" width="7" height="7" fill="#fff" stroke="#bebebe"/><rect x="12" y="12" width="3" height="3" fill="#bebebe"/></svg>
<svg style="position:absolute;left:9px;top:284px;" width="18" height="18" viewBox="0 0 18 18"><path d="M2 6Q2 2 7 2Q10 1 13 3Q16 4 15 8Q14 11 10 10Q6 12 3 10Q1 9 2 6Z" fill="#c6c6c6"/><rect x="10" y="10" width="7" height="7" fill="#fff" stroke="#bebebe"/><path d="M11.5 11.5L15.5 15.5M15.5 11.5L11.5 15.5" stroke="#bebebe"/></svg>
<svg style="position:absolute;left:9px;top:306px;" width="18" height="18" viewBox="0 0 18 18"><path d="M2 6Q2 2 7 2Q10 1 13 3Q16 4 15 8Q14 11 10 10Q6 12 3 10Q1 9 2 6Z" fill="#c6c6c6"/><rect x="10" y="10" width="7" height="7" fill="#fff" stroke="#bebebe"/><path d="M11.5 11.5L15.5 15.5M15.5 11.5L11.5 15.5" stroke="#bebebe"/></svg>
<svg style="position:absolute;left:9px;top:328px;" width="18" height="18" viewBox="0 0 18 18"><path d="M2 6Q2 2 7 2Q10 1 13 3Q16 4 15 8Q14 11 10 10Q6 12 3 10Q1 9 2 6Z" fill="#c6c6c6"/><rect x="10" y="10" width="7" height="7" fill="#fff" stroke="#bebebe"/><path d="M11.5 11.5L15.5 15.5M15.5 11.5L11.5 15.5" stroke="#bebebe"/></svg>
<svg style="position:absolute;left:9px;top:351px;" width="18" height="18" viewBox="0 0 18 18"><path d="M3 3H13Q16 3 15 7L11 8L9 15Q4 16 3 12Z" fill="#c6c6c6"/></svg>
<svg style="position:absolute;left:9px;top:374px;" width="18" height="18" viewBox="0 0 18 18"><path d="M4 14Q1 11 5 6Q9 1 13 3Q17 6 13 11Q9 16 4 14Z" fill="#c6c6c6"/></svg>
<svg style="position:absolute;left:9px;top:396px;" width="18" height="18" viewBox="0 0 18 18"><path d="M2 3L7 12L12 3" stroke="#bebebe" fill="none"/><rect x="10" y="10" width="7" height="7" fill="#fff" stroke="#bebebe"/><path d="M11.5 11.5L15.5 15.5M15.5 11.5L11.5 15.5" stroke="#bebebe"/></svg>
<svg style="position:absolute;left:9px;top:418px;" width="18" height="18" viewBox="0 0 18 18"><path d="M9 1V17M2 9H16" stroke="#bebebe"/><circle cx="5" cy="13" r="3" fill="none" stroke="#bebebe"/><rect x="10" y="3" width="6" height="5" fill="none" stroke="#bebebe"/></svg>
<svg style="position:absolute;left:9px;top:441px;" width="18" height="18" viewBox="0 0 18 18"><circle cx="6" cy="6" r="4" fill="#c6c6c6"/><circle cx="12" cy="6" r="4" fill="#c6c6c6"/><path d="M9 8L5 16M9 8L13 16" stroke="#c0c0c0" stroke-width="1.5"/></svg>
<svg style="position:absolute;left:9px;top:464px;" width="18" height="18" viewBox="0 0 18 18"><circle cx="6" cy="6" r="4.5" fill="#c6c6c6"/><circle cx="12" cy="7" r="4.5" fill="#c6c6c6"/><path d="M6 11L9 16M12 12L10 16" stroke="#c0c0c0" stroke-width="1.5"/></svg>
<svg style="position:absolute;left:9px;top:486px;" width="18" height="18" viewBox="0 0 18 18"><circle cx="6" cy="6" r="4.5" fill="#c6c6c6"/><circle cx="12" cy="6" r="4.5" fill="#cacaca"/><path d="M4 9Q5 16 10 17" stroke="#c0c0c0" fill="none"/></svg>
<svg style="position:absolute;left:9px;top:508px;" width="18" height="18" viewBox="0 0 18 18"><path d="M2 5H16M2 9H16M2 13H16M5 3V7M11 7V11M7 11V15" stroke="#bebebe" stroke-width="1"/></svg>
<svg style="position:absolute;left:9px;top:531px;" width="18" height="18" viewBox="0 0 18 18"><circle cx="8" cy="9" r="6" fill="none" stroke="#bebebe"/><path d="M8 9V3A6 6 0 0 1 14 9Z" fill="#c4c4c4"/><path d="M8 9L14 13" stroke="#bebebe"/></svg>
<svg style="position:absolute;left:27px;top:131px;" width="6" height="4" viewBox="0 0 6 4"><path d="M0 0.5H6L3 3.5Z" fill="#aaa"/></svg>
<svg style="position:absolute;left:27px;top:154px;" width="6" height="4" viewBox="0 0 6 4"><path d="M0 0.5H6L3 3.5Z" fill="#aaa"/></svg>
<svg style="position:absolute;left:27px;top:538px;" width="6" height="4" viewBox="0 0 6 4"><path d="M0 0.5H6L3 3.5Z" fill="#aaa"/></svg>
<svg style="position:absolute;left:12px;top:95px;" width="12" height="3" viewBox="0 0 12 3"><rect x="0" y="0" width="1" height="1" fill="#bbb"/><rect x="3" y="0" width="1" height="1" fill="#bbb"/><rect x="10" y="0" width="1" height="1" fill="#bbb"/></svg>
<div style="left:0px;top:0px;width:1px;height:673px;background:#9a9a9a"></div>
<div style="left:0px;top:0px;width:1px;height:22px;background:#333"></div>
<div class="t" style="left:40.5px;top:92.51px;font-size:8.0px;color:#0c0c0c;">Browser</div>
<svg style="position:absolute;left:227px;top:94px;" width="20" height="9" viewBox="0 0 20 9"><rect x="0.5" y="0.5" width="8" height="8" rx="1.5" fill="none" stroke="#555"/><path d="M2.5 3.5H6V6.5H2.5Z" fill="none" stroke="#555" stroke-width="0.8"/><rect x="10.5" y="0.5" width="8" height="8" rx="1.5" fill="none" stroke="#555"/><path d="M12.5 2.5L16.5 6.5M16.5 2.5L12.5 6.5" stroke="#555" stroke-width="0.9"/></svg>
<svg style="position:absolute;left:43px;top:109px;" width="12" height="12" viewBox="0 0 12 12"><path d="M1.5 1V10.5H8" stroke="#666" fill="none"/><rect x="6" y="7" width="5" height="4" fill="none" stroke="#3c9a46"/></svg>
<svg style="position:absolute;left:60px;top:109px;" width="13" height="13" viewBox="0 0 13 13"><path d="M2 6A4.5 4.5 0 0 1 10 3.5" stroke="#3d7fd6" stroke-width="2.2" fill="none"/><path d="M11 7A4.5 4.5 0 0 1 3 9.5" stroke="#3d7fd6" stroke-width="2.2" fill="none"/><path d="M8 1L12 4L8 6Z M5 12L1 9L5 7Z" fill="#3d7fd6"/></svg>
<svg style="position:absolute;left:78px;top:109px;" width="13" height="13" viewBox="0 0 13 13"><path d="M1 1H12L8 6V12L5 10V6Z" fill="#4a90c8"/></svg>
<svg style="position:absolute;left:96px;top:109px;" width="13" height="13" viewBox="0 0 13 13"><path d="M2 2H11M6.5 4V12M3 7L6.5 3.5L10 7" stroke="#666" stroke-width="1.3" fill="none"/><rect x="1" y="8" width="3" height="4" fill="#e3b43a"/></svg>
<svg style="position:absolute;left:114px;top:109px;" width="12" height="12" viewBox="0 0 12 12"><circle cx="6" cy="6" r="5" fill="#4a7ec4"/><rect x="5.2" y="5" width="1.6" height="4" fill="#fff"/><circle cx="6" cy="3.4" r="0.9" fill="#fff"/></svg>
<div style="left:37px;top:127px;width:209px;height:185px;background:#fff;border:1px solid #b8b8b8;box-sizing:border-box"></div>
<div style="left:235px;top:128px;width:10px;height:183px;background:#f7f7f7;border-left:1px solid #e0e0e0;box-sizing:border-box"></div>
<div style="left:236px;top:229px;width:9px;height:72px;background:#e2e2e4;border:1px solid #cfcfd2;box-sizing:border-box"></div>
<svg style="position:absolute;left:237px;top:130px;" width="7" height="5" viewBox="0 0 7 5"><path d="M0 4L7 4L3.5 0Z" fill="#555"/></svg>
<svg style="position:absolute;left:237px;top:304px;" width="7" height="5" viewBox="0 0 7 5"><path d="M0 0L7 0L3.5 4Z" fill="#555"/></svg>
<div style="left:38px;top:268px;width:184px;height:13px;background:#efedf1"></div>
<svg style="position:absolute;left:52px;top:127.5px;" width="14" height="14" viewBox="0 0 14 14"><path d="M7 0.5L8.8 5H13.5L9.7 8L11.2 13L7 10L2.8 13L4.3 8L0.5 5H5.2Z" fill="#f3e14a" stroke="#c9b52a" stroke-width="0.6"/></svg>
<div class="t" style="left:67px;top:129.41px;font-size:8.0px;color:#0c0c0c;">Favorites</div>
<svg style="position:absolute;left:42px;top:143.8px;" width="5" height="7" viewBox="0 0 5 7"><path d="M1 0.5L4.5 3.5L1 6.5Z" fill="#555"/></svg>
<svg style="position:absolute;left:52px;top:140.8px;" width="13" height="12" viewBox="0 0 13 12"><path d="M1 2Q4 0 7 2V11Q4 9 1 11Z M7 2Q10 0 12 2V11Q10 9 7 11Z" fill="#e4e4e4" stroke="#9a9a9a" stroke-width="0.8"/><path d="M8.5 1V5L9.5 4L10.5 5V1" fill="#4a7ec4"/></svg>
<div class="t" style="left:67px;top:141.71px;font-size:8.0px;color:#0c0c0c;">Spatial Bookmarks</div>
<svg style="position:absolute;left:42px;top:156.5px;" width="5" height="7" viewBox="0 0 5 7"><path d="M1 0.5L4.5 3.5L1 6.5Z" fill="#555"/></svg>
<svg style="position:absolute;left:52px;top:153.5px;" width="13" height="12" viewBox="0 0 13 12"><path d="M1.5 1.5H8V11.5H1.5Z" fill="#fff" stroke="#777" stroke-width="0.9"/><path d="M4 9V6.5L6 5L8 6.5V9Z" fill="none" stroke="#555" stroke-width="0.9"/></svg>
<div class="t" style="left:67px;top:154.41px;font-size:8.0px;color:#0c0c0c;">Home</div>
<svg style="position:absolute;left:42px;top:169.2px;" width="5" height="7" viewBox="0 0 5 7"><path d="M1 0.5L4.5 3.5L1 6.5Z" fill="#555"/></svg>
<svg style="position:absolute;left:52px;top:166.2px;" width="13" height="11" viewBox="0 0 13 11"><path d="M0.5 1.5H5L6 3H12.5V10.5H0.5Z" fill="#f6f6f6" stroke="#8c8c8c" stroke-width="0.9"/></svg>
<div class="t" style="left:67px;top:167.11px;font-size:8.0px;color:#0c0c0c;">C:\</div>
<svg style="position:absolute;left:42px;top:181.9px;" width="5" height="7" viewBox="0 0 5 7"><path d="M1 0.5L4.5 3.5L1 6.5Z" fill="#555"/></svg>
<svg style="position:absolute;left:52px;top:178.9px;" width="13" height="11" viewBox="0 0 13 11"><path d="M0.5 1.5H5L6 3H12.5V10.5H0.5Z" fill="#f6f6f6" stroke="#8c8c8c" stroke-width="0.9"/></svg>
<div class="t" style="left:67px;top:179.81px;font-size:8.0px;color:#0c0c0c;">D:\ (Volume)</div>
<svg style="position:absolute;left:42px;top:194.6px;" width="5" height="7" viewBox="0 0 5 7"><path d="M1 0.5L4.5 3.5L1 6.5Z" fill="#555"/></svg>
<svg style="position:absolute;left:52px;top:191.6px;" width="13" height="11" viewBox="0 0 13 11"><path d="M0.5 1.5H5L6 3H12.5V10.5H0.5Z" fill="#f6f6f6" stroke="#8c8c8c" stroke-width="0.9"/></svg>
<div class="t" style="left:67px;top:192.51px;font-size:8.0px;color:#0c0c0c;">C:\ (Google Drive)</div>
<svg style="position:absolute;left:41px;top:208.3px;" width="7" height="5" viewBox="0 0 7 5"><path d="M0 0.5H7L3.5 4Z" fill="#555"/></svg>
<svg style="position:absolute;left:52px;top:204px;" width="14" height="13" viewBox="0 0 14 13"><path d="M1 5L7 2L13 5V10L7 13L1 10Z" fill="#e8c63a" stroke="#a98a1a" stroke-width="0.6"/><circle cx="7.5" cy="4.5" r="4" fill="#5a8fd0"/><path d="M5 3Q7 6 10 4" stroke="#fff" stroke-width="0.8" fill="none"/></svg>
<div class="t" style="left:67px;top:205.21px;font-size:8.0px;color:#0c0c0c;">GeoPackage</div>
<svg style="position:absolute;left:54px;top:221px;" width="7" height="5" viewBox="0 0 7 5"><path d="M0 0.5H7L3.5 4Z" fill="#555"/></svg>
<svg style="position:absolute;left:66px;top:217px;" width="10" height="12" viewBox="0 0 10 12"><path d="M1 2Q5 0 9 2V10Q5 12 1 10Z" fill="#f2f2f2" stroke="#8a8a8a" stroke-width="0.8"/><path d="M1 5Q5 7 9 5M1 7.5Q5 9.5 9 7.5" stroke="#8a8a8a" stroke-width="0.7" fill="none"/></svg>
<div class="t" style="left:78px;top:217.91px;font-size:8.0px;color:#0c0c0c;">limiti_admin_ISTAT_2021_WGS84.gpkg</div>
<svg style="position:absolute;left:76px;top:230px;" width="12" height="12" viewBox="0 0 12 12"><circle cx="5.5" cy="5.5" r="4" fill="none" stroke="#93b023" stroke-width="2"/><path d="M6.5 6.5L10.5 10.5" stroke="#93b023" stroke-width="2"/><circle cx="5.5" cy="5.5" r="1.2" fill="#ee7913"/></svg>
<div class="t" style="left:90px;top:230.71px;font-size:8.0px;color:#0c0c0c;">colori_grafici</div>
<svg style="position:absolute;left:66px;top:245.6px;" width="5" height="7" viewBox="0 0 5 7"><path d="M1 0.5L4.5 3.5L1 6.5Z" fill="#555"/></svg>
<svg style="position:absolute;left:76px;top:243.6px;" width="12" height="10" viewBox="0 0 12 10"><path d="M1.5 3.5Q3 1 6 2.5Q9 1 10.5 3.5L10.5 7.5Q8 9 6 7.5Q3 9 1.5 7.5Z" fill="#e8e8e8" stroke="#8a8a8a" stroke-width="0.9"/></svg>
<div class="t" style="left:90px;top:243.51px;font-size:8.0px;color:#0c0c0c;">Com01012021_WGS84</div>
<svg style="position:absolute;left:66px;top:258.3px;" width="5" height="7" viewBox="0 0 5 7"><path d="M1 0.5L4.5 3.5L1 6.5Z" fill="#555"/></svg>
<svg style="position:absolute;left:76px;top:256.3px;" width="12" height="10" viewBox="0 0 12 10"><path d="M1.5 3.5Q3 1 6 2.5Q9 1 10.5 3.5L10.5 7.5Q8 9 6 7.5Q3 9 1.5 7.5Z" fill="#e8e8e8" stroke="#8a8a8a" stroke-width="0.9"/></svg>
<div class="t" style="left:90px;top:256.21px;font-size:8.0px;color:#0c0c0c;">ProvCM01012021_WGS84</div>
<svg style="position:absolute;left:66px;top:271px;" width="5" height="7" viewBox="0 0 5 7"><path d="M1 0.5L4.5 3.5L1 6.5Z" fill="#555"/></svg>
<svg style="position:absolute;left:76px;top:269px;" width="12" height="10" viewBox="0 0 12 10"><path d="M1.5 3.5Q3 1 6 2.5Q9 1 10.5 3.5L10.5 7.5Q8 9 6 7.5Q3 9 1.5 7.5Z" fill="#e8e8e8" stroke="#8a8a8a" stroke-width="0.9"/></svg>
<div class="t" style="left:90px;top:268.91px;font-size:8.0px;color:#0c0c0c;">Reg01012021_WGS84</div>
<svg style="position:absolute;left:66px;top:283.8px;" width="5" height="7" viewBox="0 0 5 7"><path d="M1 0.5L4.5 3.5L1 6.5Z" fill="#555"/></svg>
<svg style="position:absolute;left:76px;top:281.8px;" width="12" height="10" viewBox="0 0 12 10"><path d="M1.5 3.5Q3 1 6 2.5Q9 1 10.5 3.5L10.5 7.5Q8 9 6 7.5Q3 9 1.5 7.5Z" fill="#e8e8e8" stroke="#8a8a8a" stroke-width="0.9"/></svg>
<div class="t" style="left:90px;top:281.71px;font-size:8.0px;color:#0c0c0c;">RipGeo01012021_WGS84</div>
<svg style="position:absolute;left:52px;top:293px;" width="14" height="12" viewBox="0 0 14 12"><path d="M2 11Q5 4 12 1Q9 7 3 11Z" fill="#3d6fb8"/><path d="M2 11L11 2" stroke="#fff" stroke-width="0.6"/></svg>
<div class="t" style="left:67px;top:294.51px;font-size:8.0px;color:#0c0c0c;">SpatiaLite</div>
<svg style="position:absolute;left:52px;top:306px;" width="14" height="5" viewBox="0 0 14 5"><rect x="1" y="1" width="12" height="4" fill="#3d6fb8"/></svg>
<div class="t" style="left:67px;top:306.11px;font-size:8.0px;color:#555;">PostgreSQL</div>
<div style="left:37px;top:311px;width:209px;height:1px;background:#b8b8b8"></div>
<div style="left:38px;top:312px;width:207px;height:4px;background:#f0eff2"></div>
<svg style="position:absolute;left:132px;top:314px;" width="16" height="3" viewBox="0 0 16 3"><rect x="0" y="0" width="1" height="1" fill="#b0b0b0"/><rect x="3" y="0" width="1" height="1" fill="#b0b0b0"/><rect x="6" y="0" width="1" height="1" fill="#b0b0b0"/><rect x="9" y="0" width="1" height="1" fill="#b0b0b0"/><rect x="12" y="0" width="1" height="1" fill="#b0b0b0"/><rect x="15" y="0" width="1" height="1" fill="#b0b0b0"/></svg>
<div class="t" style="left:40.5px;top:318.61px;font-size:8.0px;color:#0c0c0c;">Layers</div>
<svg style="position:absolute;left:228px;top:319px;" width="20" height="9" viewBox="0 0 20 9"><rect x="0.5" y="0.5" width="8" height="8" rx="1.5" fill="none" stroke="#555"/><path d="M2.5 3.5H6V6.5H2.5Z" fill="none" stroke="#555" stroke-width="0.8"/><rect x="10.5" y="0.5" width="8" height="8" rx="1.5" fill="none" stroke="#555"/><path d="M12.5 2.5L16.5 6.5M16.5 2.5L12.5 6.5" stroke="#555" stroke-width="0.9"/></svg>
<div style="left:41px;top:333px;width:15px;height:15px;background:#dcdce0;border:1px solid #c0c0c6;box-sizing:border-box"></div>
<svg style="position:absolute;left:43px;top:335px;" width="12" height="11" viewBox="0 0 12 11"><path d="M2 8Q4 5 7 6L8 10Q5 11 2 9Z" fill="#d9433c"/><path d="M5 7L7 10L9 9L10 5Z" fill="#e8c04a"/><path d="M8 6L11 1" stroke="#c89b3a" stroke-width="1.5"/></svg>
<svg style="position:absolute;left:60px;top:334px;" width="13" height="13" viewBox="0 0 13 13"><path d="M2 12V4H5V2H8V4H11V12" stroke="#777" fill="none"/><rect x="4" y="6" width="5" height="5" fill="#6b8bbf"/></svg>
<svg style="position:absolute;left:77px;top:335px;" width="14" height="11" viewBox="0 0 14 11"><path d="M1 5.5Q7 0 13 5.5Q7 11 1 5.5Z" fill="none" stroke="#777"/><circle cx="7" cy="5.5" r="2" fill="#777"/></svg>
<svg style="position:absolute;left:96px;top:334px;" width="13" height="13" viewBox="0 0 13 13"><path d="M1 1H12L8 6V12L5 10V6Z" fill="#4a90c8"/></svg>
<svg style="position:absolute;left:113px;top:334px;" width="14" height="13" viewBox="0 0 14 13"><path d="M2 2V11M2 4H7M2 9H7" stroke="#777" stroke-width="1.2" fill="none"/><rect x="7" y="6" width="4" height="5" fill="none" stroke="#777"/></svg>
<svg style="position:absolute;left:129px;top:338px;" width="6" height="4" viewBox="0 0 6 4"><path d="M0 0H6L3 3.5Z" fill="#555"/></svg>
<svg style="position:absolute;left:139px;top:334px;" width="13" height="13" viewBox="0 0 13 13"><path d="M1 2H12M3 5H10M6.5 5V12M3 9L6.5 12L10 9" stroke="#4a7ec4" stroke-width="1.4" fill="none"/></svg>
<svg style="position:absolute;left:157px;top:334px;" width="13" height="13" viewBox="0 0 13 13"><path d="M1 2H12M6.5 4V12M3 7L6.5 3.5L10 7" stroke="#4a7ec4" stroke-width="1.4" fill="none"/></svg>
<svg style="position:absolute;left:177px;top:334px;" width="12" height="13" viewBox="0 0 12 13"><path d="M6 1V8" stroke="#777" stroke-width="1.2"/><rect x="3" y="8" width="6" height="4" fill="#d9433c"/></svg>
<div style="left:37px;top:352px;width:209px;height:300px;background:#fff;border:1px solid #b8b8b8;border-bottom:none;box-sizing:border-box"></div>
<div style="left:38px;top:353px;width:207px;height:13px;background:#f0eff2"></div>
<svg style="position:absolute;left:247px;top:367px;" width="3" height="12" viewBox="0 0 3 12"><rect x="1" y="0" width="1" height="1" fill="#a8a8a8"/><rect x="1" y="3" width="1" height="1" fill="#a8a8a8"/><rect x="1" y="6" width="1" height="1" fill="#a8a8a8"/><rect x="1" y="9" width="1" height="1" fill="#a8a8a8"/></svg>
<div style="left:55px;top:355px;width:10px;height:10px;background:#fff;border:1px solid #9a9a9a;box-sizing:border-box"></div>
<svg style="position:absolute;left:56px;top:356px;" width="8" height="8" viewBox="0 0 8 8"><path d="M1 4L3 6.5L7 1" stroke="#111" stroke-width="1.2" fill="none"/></svg>
<div style="left:69px;top:353px;width:11px;height:11px;background:#b72c3b;border:1px solid #6a1a24;box-sizing:border-box"></div>
<div class="t" style="left:85px;top:353.31px;font-size:8.5px;color:#111;font-weight:bold"><u>Reg01012021_WGS84</u></div>
<div style="left:246px;top:349px;width:4px;height:303px;background:#f0eff2"></div>
<div style="left:250px;top:91px;width:588px;height:561px;background:#fff;border:1px solid #a8a8a8;border-bottom:none;box-sizing:border-box"></div>
<div class="t" style="left:845px;top:92.51px;font-size:8.0px;color:#0c0c0c;">Layer Styling</div>
<svg style="position:absolute;left:1177px;top:94px;" width="20" height="9" viewBox="0 0 20 9"><rect x="0.5" y="0.5" width="8" height="8" rx="1.5" fill="none" stroke="#555"/><path d="M2.5 3.5H6V6.5H2.5Z" fill="none" stroke="#555" stroke-width="0.8"/><rect x="10.5" y="0.5" width="8" height="8" rx="1.5" fill="none" stroke="#555"/><path d="M12.5 2.5L16.5 6.5M16.5 2.5L12.5 6.5" stroke="#555" stroke-width="0.9"/></svg>
<div style="left:844px;top:107px;width:351px;height:17px;background:linear-gradient(#fbfbfb,#f1f1f1);border:1px solid #b0b0b0;border-radius:2px;box-sizing:border-box"></div>
<svg style="position:absolute;left:848px;top:110px;" width="12" height="10" viewBox="0 0 12 10"><path d="M1.5 3.5 Q3 1 6 2.5 Q9 1 10.5 3.5 L10.5 7.5 Q8 9 6 7.5 Q3 9 1.5 7.5Z" fill="#e6e6e6" stroke="#8a8a8a" stroke-width="0.9"/></svg>
<div class="t" style="left:861.5px;top:110.11px;font-size:8.0px;color:#0c0c0c;;transform:scaleX(0.93);transform-origin:0 0">Reg01012021_WGS84</div>
<svg style="position:absolute;left:1180px;top:113px;" width="7" height="5" viewBox="0 0 7 5"><path d="M0 0L7 0L3.5 4Z" fill="#333"/></svg>
<svg style="position:absolute;left:847px;top:133px;" width="18" height="15" viewBox="0 0 18 15"><path d="M2 9 Q5 6 9 8 L11 13 Q6 14 2 11Z" fill="#d9433c"/><path d="M5 9 L8 13 L11 12 L13 7Z" fill="#e8c04a"/><path d="M10 8 L16 1" stroke="#c89b3a" stroke-width="2"/><path d="M3 10 L6 12" stroke="#4a6fc2" stroke-width="1.5"/></svg>
<div style="left:873px;top:132px;width:322px;height:17px;background:linear-gradient(#fbfbfb,#f1f1f1);border:1px solid #b0b0b0;border-radius:2px;box-sizing:border-box"></div>
<svg style="position:absolute;left:878px;top:135px;" width="9" height="11" viewBox="0 0 9 11"><rect x="0" y="0" width="9" height="2.2" fill="#2e9a48"/><rect x="0" y="4" width="9" height="2.2" fill="#2e9a48"/><rect x="0" y="8" width="9" height="2.2" fill="#2e9a48"/></svg>
<div class="t" style="left:890px;top:135.31px;font-size:8.0px;color:#0c0c0c;;transform:scaleX(0.9);transform-origin:0 0">Single Symbol</div>
<svg style="position:absolute;left:1181px;top:138px;" width="7" height="5" viewBox="0 0 7 5"><path d="M0 0L7 0L3.5 4Z" fill="#333"/></svg>
<div style="left:844px;top:151px;width:27px;height:499px;background:#5a5a5a"></div>
<svg style="position:absolute;left:847px;top:155px;" width="20" height="13" viewBox="0 0 20 13"><path d="M3 3 H17 V10 H3 L1 6.5Z" fill="#f1e25a" stroke="#b9a52c" stroke-width="0.8"/><text x="5" y="9.5" font-size="6" font-family="Liberation Sans" font-weight="bold" fill="#333">abc</text></svg>
<svg style="position:absolute;left:847px;top:177px;" width="20" height="13" viewBox="0 0 20 13"><rect x="1" y="2.5" width="17" height="8" rx="3" fill="#fff"/><text x="2.5" y="9.5" font-size="7" font-family="Liberation Sans" font-weight="bold" fill="#333">abc</text></svg>
<svg style="position:absolute;left:847px;top:199px;" width="18" height="17" viewBox="0 0 18 17"><path d="M2 6 L9 2 L16 6 L16 13 L9 16 L2 13Z" fill="#e2c84a"/><path d="M2 6 L9 9 L16 6 L9 2Z" fill="#e05050"/><path d="M9 9 L9 16 L16 13 L16 6Z" fill="#5da84a"/></svg>
<svg style="position:absolute;left:847px;top:220px;" width="18" height="18" viewBox="0 0 18 18"><rect x="6" y="1" width="6" height="5" fill="#e36b5a"/><rect x="1" y="10" width="6" height="5" fill="#f0a030"/><rect x="11" y="10" width="6" height="5" fill="#f0a030"/><path d="M9 6V9M4 10V8H14V10" stroke="#f0c040" stroke-width="1.2" fill="none"/><rect x="4" y="15" width="10" height="2" fill="#3d7fd6"/></svg>
<svg style="position:absolute;left:848px;top:244px;" width="16" height="16" viewBox="0 0 16 16"><path d="M2 5 L8 5 L11 9 L14 9" stroke="#5aa55a" stroke-width="2" fill="none"/><path d="M2 10 L6 10 L9 13 L14 13" stroke="#d8513a" stroke-width="2" fill="none"/><circle cx="4" cy="7" r="2" fill="#5aa55a"/></svg>
<div style="left:896px;top:181px;width:43px;height:43px;background:#b72c3b"></div>
<div style="left:965px;top:153px;width:182px;height:97px;background:#fff;border:1px solid #adadad;box-sizing:border-box"></div>
<div style="left:966px;top:154px;width:180px;height:13px;background:#ececf0"></div>
<svg style="position:absolute;left:970px;top:157px;" width="7" height="5" viewBox="0 0 7 5"><path d="M0 0L7 0L3.5 4Z" fill="#444"/></svg>
<div style="left:982px;top:155px;width:12px;height:11px;background:#b72c3b;border:1px solid #7a1c28;box-sizing:border-box"></div>
<div class="t" style="left:999px;top:154.91px;font-size:8.0px;color:#111;font-weight:bold">Fill</div>
<div style="left:996px;top:168px;width:12px;height:11px;background:#b72c3b;border:1px solid #7a1c28;box-sizing:border-box"></div>
<div class="t" style="left:1012px;top:169.11px;font-size:8.0px;color:#0c0c0c;">Simple Fill</div>
<div style="left:1152px;top:155px;width:19px;height:16px;background:linear-gradient(#fcfcfc,#efefef);border:1px solid #c6c6c6;border-radius:2px;box-sizing:border-box"></div>
<div style="left:1152px;top:175px;width:19px;height:16px;background:linear-gradient(#fcfcfc,#efefef);border:1px solid #c6c6c6;border-radius:2px;box-sizing:border-box"></div>
<div style="left:1152px;top:196px;width:19px;height:16px;background:linear-gradient(#fcfcfc,#efefef);border:1px solid #c6c6c6;border-radius:2px;box-sizing:border-box"></div>
<div style="left:1176px;top:155px;width:19px;height:16px;background:linear-gradient(#fcfcfc,#efefef);border:1px solid #c6c6c6;border-radius:2px;box-sizing:border-box"></div>
<div style="left:1176px;top:175px;width:19px;height:16px;background:linear-gradient(#fcfcfc,#efefef);border:1px solid #c6c6c6;border-radius:2px;box-sizing:border-box"></div>
<div style="left:1176px;top:196px;width:19px;height:16px;background:linear-gradient(#fcfcfc,#efefef);border:1px solid #c6c6c6;border-radius:2px;box-sizing:border-box"></div>
<svg style="position:absolute;left:1155px;top:157px;" width="13" height="13" viewBox="0 0 13 13"><path d="M4.5 1H8.5V4.5H12V8.5H8.5V12H4.5V8.5H1V4.5H4.5Z" fill="#3c9a46" stroke="#2a7a36" stroke-width="0.6"/></svg>
<svg style="position:absolute;left:1179px;top:159px;" width="13" height="8" viewBox="0 0 13 8"><path d="M1 7L6.5 1L12 7Z" fill="#d2d2d2"/></svg>
<svg style="position:absolute;left:1179px;top:180px;" width="13" height="8" viewBox="0 0 13 8"><path d="M1 1L6.5 7L12 1Z" fill="#d2d2d2"/></svg>
<svg style="position:absolute;left:1155px;top:180px;" width="13" height="7" viewBox="0 0 13 7"><rect x="1" y="1" width="11" height="5" fill="none" stroke="#cfcfcf"/></svg>
<svg style="position:absolute;left:1156px;top:199px;" width="11" height="11" viewBox="0 0 11 11"><rect x="1" y="1" width="9" height="9" fill="none" stroke="#cfcfcf"/></svg>
<svg style="position:absolute;left:1180px;top:199px;" width="11" height="11" viewBox="0 0 11 11"><rect x="1.5" y="5" width="8" height="5" fill="#d6d6d6"/><path d="M3 5V3Q5.5 0 8 3" stroke="#d6d6d6" fill="none"/></svg>
<div style="left:873px;top:254px;width:322px;height:1px;background:#d0d0d0"></div>
<div class="t" style="left:873px;top:263.31px;font-size:8.0px;color:#0c0c0c;;transform:scaleX(0.88);transform-origin:0 0">Color</div>
<div style="left:906px;top:262px;width:273px;height:13px;background:#fafafa;border:1px solid #b8b8b8;border-radius:2px;box-sizing:border-box"></div>
<div style="left:908px;top:263.5px;width:269px;height:10px;background:#b72c3b;border-radius:2px"></div>
<div style="left:1178px;top:262px;width:10px;height:13px;background:#fafafa;border:1px solid #b8b8b8;box-sizing:border-box"></div>
<svg style="position:absolute;left:1180px;top:267px;" width="6" height="4" viewBox="0 0 6 4"><path d="M0 0L6 0L3 3.5Z" fill="#444"/></svg>
<div class="t" style="left:873px;top:284.31px;font-size:8.0px;color:#0c0c0c;;transform:scaleX(0.93);transform-origin:0 0">Opacity</div>
<div style="left:905px;top:289px;width:180px;height:2px;background:#c8c8c8;border-radius:1px"></div>
<div style="left:1079px;top:284px;width:10px;height:12px;background:#fafafa;border:1px solid #9c9c9c;border-radius:2px;box-sizing:border-box"></div>
<div style="left:1092px;top:283px;width:72px;height:14px;background:#fff;border:1px solid #b8b8b8;border-radius:2px;box-sizing:border-box"></div>
<div class="t" style="left:1096px;top:284.11px;font-size:8.0px;color:#0c0c0c;">100.0 %</div>
<svg style="position:absolute;left:1154px;top:284px;" width="8" height="12" viewBox="0 0 8 12"><path d="M1 4.5L4 1.5L7 4.5Z M1 7.5L4 10.5L7 7.5Z" fill="#444"/></svg>
<svg style="position:absolute;left:1169px;top:283px;" width="18" height="14" viewBox="0 0 18 14"><path d="M2 6Q2 2 6 2H12M2 6V11M4 6H13M4 9H12M4 12H11" stroke="#444" stroke-width="1.2" fill="none"/><path d="M14 11L17 11L15.5 13Z" fill="#444"/></svg>
<div class="t" style="left:873px;top:305.91px;font-size:8.0px;color:#0c0c0c;">Unit</div>
<div style="left:904px;top:304px;width:285px;height:15px;background:linear-gradient(#fbfbfb,#f1f1f1);border:1px solid #b0b0b0;border-radius:2px;box-sizing:border-box"></div>
<div class="t" style="left:906.5px;top:305.91px;font-size:8.0px;color:#0c0c0c;;transform:scaleX(0.88);transform-origin:0 0">Millimeters</div>
<svg style="position:absolute;left:1178px;top:310px;" width="7" height="5" viewBox="0 0 7 5"><path d="M0 0L7 0L3.5 4Z" fill="#333"/></svg>
<div style="left:873px;top:328px;width:279px;height:14px;background:#fff;border:1px solid #b8b8b8;border-radius:2px;box-sizing:border-box"></div>
<svg style="position:absolute;left:880px;top:330px;" width="10" height="10" viewBox="0 0 10 10"><circle cx="4" cy="4" r="3" fill="none" stroke="#888" stroke-width="0.9"/><path d="M6 6L9 9" stroke="#888" stroke-width="1.1"/></svg>
<div class="t" style="left:893px;top:329.11px;font-size:8.0px;color:#333;">Favorites</div>
<svg style="position:absolute;left:1136px;top:331px;" width="12" height="8" viewBox="0 0 12 8"><path d="M3 1H11V7H3L0.5 4Z" fill="#9c9c9c"/><path d="M5 2.5L9 5.5M9 2.5L5 5.5" stroke="#fff" stroke-width="1"/></svg>
<div style="left:1153px;top:328px;width:14px;height:14px;background:#f4f4f4;border:1px solid #c4c4c4;box-sizing:border-box"></div>
<svg style="position:absolute;left:1157px;top:333px;" width="7" height="5" viewBox="0 0 7 5"><path d="M0 0L7 0L3.5 4Z" fill="#444"/></svg>
<svg style="position:absolute;left:1172px;top:328px;" width="16" height="14" viewBox="0 0 16 14"><path d="M3 2V12M3 7H8" stroke="#d0453a" stroke-width="1.6"/><path d="M10 12L14 3" stroke="#3c9a46" stroke-width="1.6"/><circle cx="12" cy="4" r="1.6" fill="#e3b43a"/></svg>
<div style="left:872px;top:345px;width:319px;height:237px;background:#fff;border:1px solid #c6c6c6;box-sizing:border-box"></div>
<div style="left:1179px;top:346px;width:11px;height:235px;background:#f6f6f6;border-left:1px solid #e2e2e2;box-sizing:border-box"></div>
<div style="left:1180px;top:448px;width:10px;height:123px;background:#e0e0e2;border:1px solid #d0d0d3;box-sizing:border-box"></div>
<svg style="position:absolute;left:1181px;top:349px;" width="7" height="5" viewBox="0 0 7 5"><path d="M0 4L7 4L3.5 0Z" fill="#555"/></svg>
<svg style="position:absolute;left:1181px;top:574px;" width="7" height="5" viewBox="0 0 7 5"><path d="M0 0L7 0L3.5 4Z" fill="#555"/></svg>
<div class="t" style="left:878px;top:352.75px;font-size:11.3px;color:#111;font-weight:bold">Project Styles</div>
<div class="t" style="left:878px;top:372.35px;font-size:11.3px;color:#111;font-weight:bold">Default</div>
<div style="left:877px;top:385px;width:296px;height:1px;background:#c8c8c8"></div>
<svg style="position:absolute;left:898px;top:400px" width="46" height="39" viewBox="0 0 46 39"><defs><linearGradient id="pl" x1="0" y1="0" x2="1" y2="1"><stop offset="0" stop-color="#4b3cc0"/><stop offset="0.22" stop-color="#8a16a6"/><stop offset="0.5" stop-color="#d2508a"/><stop offset="0.75" stop-color="#ee7a58"/><stop offset="1" stop-color="#eee030"/></linearGradient></defs><rect x="0.5" y="0.5" width="45" height="38" fill="url(#pl)" stroke="#222"/></svg>
<div style="left:991px;top:401px;width:44px;height:37px;background:#999"></div>
<svg style="position:absolute;left:1082px;top:400px;" width="46" height="39" viewBox="0 0 46 39"><clipPath id="c1082400"><rect width="46" height="39"/></clipPath><g clip-path="url(#c1082400)"><path d="M-39.0 39L0.0 0M-31.7 39L7.3 0M-24.4 39L14.6 0M-17.1 39L21.9 0M-9.8 39L29.2 0M-2.5 39L36.5 0M4.8 39L43.8 0M12.1 39L51.1 0M19.4 39L58.4 0M26.7 39L65.7 0M34.0 39L73.0 0M41.3 39L80.3 0M48.6 39L87.6 0M55.9 39L94.9 0M63.2 39L102.2 0M70.5 39L109.5 0M77.8 39L116.8 0" stroke="#111" stroke-width="1"/></g><rect x="0.9" y="0.9" width="44.2" height="37.2" fill="none" stroke="#111" stroke-width="1.8"/></svg>
<svg style="position:absolute;left:898px;top:500px;" width="46" height="39" viewBox="0 0 46 39"><clipPath id="c898500"><rect width="46" height="39"/></clipPath><g clip-path="url(#c898500)"><path d="M-39.0 0L0.0 39M-31.7 0L7.3 39M-24.4 0L14.6 39M-17.1 0L21.9 39M-9.8 0L29.2 39M-2.5 0L36.5 39M4.8 0L43.8 39M12.1 0L51.1 39M19.4 0L58.4 39M26.7 0L65.7 39M34.0 0L73.0 39M41.3 0L80.3 39M48.6 0L87.6 39M55.9 0L94.9 39M63.2 0L102.2 39M70.5 0L109.5 39M77.8 0L116.8 39" stroke="#111" stroke-width="1"/></g><rect x="0.6" y="0.6" width="44.8" height="37.8" fill="none" stroke="#111" stroke-width="1.2"/></svg>
<svg style="position:absolute;left:990px;top:500px;" width="46" height="39" viewBox="0 0 46 39"><clipPath id="c990500"><rect width="46" height="39"/></clipPath><g clip-path="url(#c990500)"><path d="M-39.0 39L0.0 0M-31.7 39L7.3 0M-24.4 39L14.6 0M-17.1 39L21.9 0M-9.8 39L29.2 0M-2.5 39L36.5 0M4.8 39L43.8 0M12.1 39L51.1 0M19.4 39L58.4 0M26.7 39L65.7 0M34.0 39L73.0 0M41.3 39L80.3 0M48.6 39L87.6 0M55.9 39L94.9 0M63.2 39L102.2 0M70.5 39L109.5 0M77.8 39L116.8 0M-39.0 0L0.0 39M-31.7 0L7.3 39M-24.4 0L14.6 39M-17.1 0L21.9 39M-9.8 0L29.2 39M-2.5 0L36.5 39M4.8 0L43.8 39M12.1 0L51.1 39M19.4 0L58.4 39M26.7 0L65.7 39M34.0 0L73.0 39M41.3 0L80.3 39M48.6 0L87.6 39M55.9 0L94.9 39M63.2 0L102.2 39M70.5 0L109.5 39M77.8 0L116.8 39" stroke="#111" stroke-width="1"/></g><rect x="0.6" y="0.6" width="44.8" height="37.8" fill="none" stroke="#111" stroke-width="1.2"/></svg>
<svg style="position:absolute;left:1082px;top:500px;" width="46" height="39" viewBox="0 0 46 39"><rect x="1.2" y="1.2" width="43.6" height="36.6" rx="1" fill="#fff" stroke="#4a82c4" stroke-width="2.4"/></svg>
<div class="t" style="left:871.5px;width:100px;text-align:center;top:462.7px;font-size:8.0px;color:#222">gradient - plasma</div>
<div class="t" style="left:963px;width:100px;text-align:center;top:462.7px;font-size:8.0px;color:#222">gray 3 fill</div>
<div class="t" style="left:1055.5px;width:100px;text-align:center;top:462.7px;font-size:8.0px;color:#222">hashed black /</div>
<div class="t" style="left:871.5px;width:100px;text-align:center;top:562.6px;font-size:8.0px;color:#222">hashed black \</div>
<div class="t" style="left:963px;width:100px;text-align:center;top:562.6px;font-size:8.0px;color:#222">hashed black X</div>
<div class="t" style="left:1055.5px;width:100px;text-align:center;top:562.6px;font-size:8.0px;color:#222">outline blue</div>
<div style="left:874px;top:587px;width:15px;height:14px;background:#dfe3ea;border:1px solid #b8c0cc;box-sizing:border-box"></div>
<svg style="position:absolute;left:877px;top:590px;" width="9" height="9" viewBox="0 0 9 9"><rect x="0" y="0" width="2" height="2" fill="#6b8bbf"/><rect x="0" y="3" width="2" height="2" fill="#6b8bbf"/><rect x="0" y="6" width="2" height="2" fill="#6b8bbf"/><rect x="3" y="0" width="2" height="2" fill="#6b8bbf"/><rect x="3" y="3" width="2" height="2" fill="#6b8bbf"/><rect x="3" y="6" width="2" height="2" fill="#6b8bbf"/><rect x="6" y="0" width="2" height="2" fill="#6b8bbf"/><rect x="6" y="3" width="2" height="2" fill="#6b8bbf"/><rect x="6" y="6" width="2" height="2" fill="#6b8bbf"/></svg>
<svg style="position:absolute;left:893px;top:589px;" width="11" height="10" viewBox="0 0 11 10"><rect x="1" y="1" width="9" height="8" fill="none" stroke="#6b8bbf"/><path d="M1 4H10M1 6.5H10" stroke="#6b8bbf"/></svg>
<div style="left:1071px;top:587px;width:58px;height:14px;background:linear-gradient(#fdfdfd,#f0f0f0);border:1px solid #bdbdbd;border-radius:2px;box-sizing:border-box"></div>
<div class="t" style="left:1073.5px;top:588.91px;font-size:8.0px;color:#0c0c0c;;transform:scaleX(0.87);transform-origin:0 0">Save Symbol...</div>
<div style="left:1133px;top:587px;width:56px;height:14px;background:linear-gradient(#fdfdfd,#f0f0f0);border:1px solid #bdbdbd;border-radius:2px;box-sizing:border-box"></div>
<div class="t" style="left:1139px;top:588.91px;font-size:8.0px;color:#0c0c0c;;transform:scaleX(0.94);transform-origin:0 0">Advanced</div>
<svg style="position:absolute;left:1179px;top:592px;" width="6" height="4" viewBox="0 0 6 4"><path d="M0 0L6 0L3 3.5Z" fill="#444"/></svg>
<svg style="position:absolute;left:876px;top:618px;" width="7" height="9" viewBox="0 0 7 9"><path d="M0 0L6 4.5L0 9Z" fill="#222"/></svg>
<div class="t" style="left:888px;top:616.91px;font-size:8.0px;color:#111;font-weight:bold">Layer Rendering</div>
<div style="left:874px;top:635px;width:16px;height:14px;background:linear-gradient(#fdfdfd,#f0f0f0);border:1px solid #c4c4c4;border-radius:2px;box-sizing:border-box"></div>
<svg style="position:absolute;left:877px;top:637px;" width="10" height="10" viewBox="0 0 10 10"><path d="M2 5Q2 1 6 2Q9 3 8 7" stroke="#d8703a" stroke-width="2" fill="none"/><path d="M0 4L3 8L5 3Z" fill="#d8703a"/></svg>
<div style="left:893px;top:635px;width:16px;height:14px;background:linear-gradient(#fdfdfd,#f0f0f0);border:1px solid #c4c4c4;border-radius:2px;box-sizing:border-box"></div>
<svg style="position:absolute;left:896px;top:637px;" width="10" height="10" viewBox="0 0 10 10"><path d="M1 8L8 2" stroke="#5aa55a" stroke-width="2"/><path d="M5 1L9 1L9 5Z" fill="#5aa55a"/></svg>
<div style="left:1077px;top:637px;width:10px;height:10px;background:#fff;border:1px solid #999;box-sizing:border-box"></div>
<svg style="position:absolute;left:1078px;top:638px;" width="8" height="8" viewBox="0 0 8 8"><path d="M1 4L3 6.5L7 1" stroke="#111" stroke-width="1.2" fill="none"/></svg>
<div class="t" style="left:1090px;top:636.51px;font-size:8.0px;color:#555;;transform:scaleX(0.95);transform-origin:0 0">Live update</div>
<div style="left:1139px;top:635px;width:55px;height:15px;background:linear-gradient(#fdfdfd,#f0f0f0);border:1px solid #bdbdbd;border-radius:2px;box-sizing:border-box"></div>
<div class="t" style="left:1156px;top:636.71px;font-size:8.0px;color:#0c0c0c;">Apply</div>
<div style="left:0px;top:652px;width:1200px;height:19px;background:#f0eff2"></div>
<div style="left:0px;top:672px;width:1200px;height:1px;background:#a4a4a6"></div>
<div style="left:1197px;top:0px;width:1px;height:673px;background:#a4a4a6"></div>
<div style="left:1198px;top:0px;width:2px;height:673px;background:#eeeeee"></div>
<div style="left:1197px;top:0px;width:3px;height:31px;background:#2e2e2e"></div>
<div style="left:4px;top:655px;width:141px;height:14px;background:#fff;border:1px solid #c8c8c8;box-sizing:border-box"></div>
<svg style="position:absolute;left:9px;top:657px;" width="10" height="10" viewBox="0 0 10 10"><circle cx="4" cy="4" r="3" fill="none" stroke="#777" stroke-width="1"/><path d="M6 6L9 9" stroke="#777" stroke-width="1.2"/></svg>
<div class="t" style="left:23px;top:656.41px;font-size:8.0px;color:#9a9a9a;">Type to locate (Ctrl+K)</div>
<div class="t" style="left:608px;top:656.61px;font-size:8.0px;color:#0c0c0c;">Coordinate</div>
<div style="left:650px;top:656px;width:71px;height:14px;background:#fff;border:1px solid #c4c4c4;box-sizing:border-box"></div>
<div class="t" style="left:655px;top:656.61px;font-size:8.0px;color:#0c0c0c;">984157,4035651</div>
<svg style="position:absolute;left:725px;top:656px;" width="12" height="12" viewBox="0 0 12 12"><path d="M2 2L10 10M10 2L2 10" stroke="#555" stroke-width="1.4"/><circle cx="6" cy="6" r="2.2" fill="none" stroke="#555"/></svg>
<div class="t" style="left:744px;top:656.61px;font-size:8.0px;color:#0c0c0c;">Scale</div>
<div style="left:765px;top:656px;width:58px;height:14px;background:#fff;border:1px solid #c4c4c4;box-sizing:border-box"></div>
<div class="t" style="left:768px;top:656.61px;font-size:8.0px;color:#0c0c0c;">1:7252278</div>
<div style="left:808px;top:657px;width:14px;height:12px;background:#f2f2f2;border-left:1px solid #d0d0d0;box-sizing:border-box"></div>
<svg style="position:absolute;left:812px;top:661px;" width="6" height="4" viewBox="0 0 6 4"><path d="M0 0H6L3 3.5Z" fill="#444"/></svg>
<svg style="position:absolute;left:830px;top:656px;" width="10" height="12" viewBox="0 0 10 12"><rect x="1" y="5" width="8" height="6" fill="#555"/><path d="M2.5 5V3Q5 0 7.5 3V5" stroke="#555" stroke-width="1.2" fill="none"/></svg>
<div class="t" style="left:845px;top:656.61px;font-size:8.0px;color:#0c0c0c;">Magnifier</div>
<div style="left:879px;top:656px;width:59px;height:14px;background:#fff;border:1px solid #c4c4c4;box-sizing:border-box"></div>
<div class="t" style="left:883px;top:656.61px;font-size:8.0px;color:#0c0c0c;">100%</div>
<svg style="position:absolute;left:929px;top:657px;" width="7" height="12" viewBox="0 0 7 12"><path d="M0.5 4.5L3.5 1.5L6.5 4.5Z M0.5 7.5L3.5 10.5L6.5 7.5Z" fill="#555"/></svg>
<div class="t" style="left:944px;top:656.61px;font-size:8.0px;color:#0c0c0c;">Rotation</div>
<div style="left:981px;top:656px;width:58px;height:14px;background:#fff;border:1px solid #c4c4c4;box-sizing:border-box"></div>
<div class="t" style="left:984px;top:656.61px;font-size:8.0px;color:#0c0c0c;">0.0 °</div>
<svg style="position:absolute;left:1030px;top:657px;" width="7" height="12" viewBox="0 0 7 12"><path d="M0.5 4.5L3.5 1.5L6.5 4.5Z M0.5 7.5L3.5 10.5L6.5 7.5Z" fill="#555"/></svg>
<div style="left:1045px;top:657px;width:10px;height:10px;background:#fff;border:1px solid #555;box-sizing:border-box"></div>
<svg style="position:absolute;left:1046px;top:658px;" width="8" height="8" viewBox="0 0 8 8"><path d="M1 4L3 6.5L7 1" stroke="#111" stroke-width="1.2" fill="none"/></svg>
<div class="t" style="left:1057px;top:656.61px;font-size:8.0px;color:#0c0c0c;">Render</div>
<svg style="position:absolute;left:1093px;top:656px;" width="11" height="11" viewBox="0 0 11 11"><circle cx="5.5" cy="5.5" r="4.5" fill="none" stroke="#555"/><path d="M1 5.5H10M5.5 1V10M2 3H9M2 8H9" stroke="#555" stroke-width="0.7"/></svg>
<div class="t" style="left:1105px;top:656.61px;font-size:8.0px;color:#0c0c0c;">EPSG:32632</div>
<svg style="position:absolute;left:1163px;top:656px;" width="13" height="12" viewBox="0 0 13 12"><path d="M1 5Q1 1 6.5 1Q12 1 12 5Q12 9 6.5 9L3 11.5L4 8.5Q1 7.5 1 5Z" fill="#555"/><circle cx="4" cy="5" r="0.9" fill="#fff"/><circle cx="6.5" cy="5" r="0.9" fill="#fff"/><circle cx="9" cy="5" r="0.9" fill="#fff"/></svg>
<svg style="position:absolute;left:0;top:0" width="1200" height="673" viewBox="0 0 1200 673"><g fill="#b72c3b" stroke="#4a1a22" stroke-width="0.6" stroke-linejoin="round"><polygon points="342.5,191.4 349.8,188.3 363.3,186.2 372.6,184.2 379,174.2 385,169 387.2,166 390.2,167.5 391,173.5 398.5,181.7 404.5,187.7 406.7,190.7 407.5,184 410.5,178 413.5,165.2 417.2,165.2 422.5,172.7 430,169.7 434.5,170.5 437.5,175 436,166.7 436.7,160.7 443.5,161.5 445.7,158.5 446.5,149.5 453.2,149.5 456.2,152.5 463,151 466,145 478,142.7 488.5,141.2 494.5,138.7 495.2,142 499,148 502,154 514,156.2 529,158.5 538.7,160 535,163.7 531.2,169 538,175 536.5,181 538,185.5 537.2,189.2 541,191.5 545.5,194.5 544,197.5 539.5,193 529,194.5 518.5,196.7 511,201.2 502,209.5 501.5,214.7 507.4,225.1 504.5,231 501.5,240 504.5,254.8 508.9,263.7 517.8,269.7 529.7,274.1 541.6,281.6 549,296.4 555,308.3 560.8,320 569.7,331.9 583.1,340.8 592,346.7 608.3,343.8 621.7,342.3 626.1,348.2 623.2,352.7 618.7,357.1 620.2,363.1 629.1,369 644,374.9 664.7,382.4 685.5,389.8 691.5,397.2 700.4,406.1 704.8,412.1 701.9,422.5 694.4,422.5 690,415 685.5,409.1 676.6,404.6 661.8,400.2 652.9,400.2 649.9,409.1 646.9,415 642.5,422.5 646.9,429.9 658.8,440.3 664.7,444.7 666.2,458.1 655.8,462.6 646.9,468.5 648.4,481.9 641,492.3 637.5,499 636.4,505.4 628.4,508.1 623,506.7 620.3,496 626.1,484.8 629.1,477.4 635,468.5 629.1,450.7 624.6,438.8 620.2,424 617.2,424 605.3,421 593.5,415 590.5,409.1 578.6,398.7 569.7,400.2 557.8,394.2 554.9,376.4 548.4,374.8 534.1,376 527,373.6 515.1,366.5 505.6,359.4 496.1,349.9 489,340.3 481.8,330.8 474.7,332 469.9,328.5 462.8,318.9 458,311.8 452.1,309.4 448.5,295.2 443.8,283.3 442.6,269 431.9,264.3 420,257.1 409,251.8 398.6,249.7 390.3,252.8 382,263.2 373.7,271.5 363.3,275.7 361.2,273.6 364.3,267.4 367.4,263.2 359.1,261.1 349.8,258 344.6,250.7 343.5,244.5 345.6,240.3 346.6,235.1 341.4,229.9 338.3,225.8 336.2,220.6 342.5,217.4 350.8,213.3 350.8,206 343.5,198.7"/><polygon points="382.7,385.6 385.4,386.9 382.7,392.3 386.7,397.6 394.8,394.9 404.1,388.3 410.8,381.6 417.5,378.9 421.5,385.6 425.5,392.3 428.2,401.6 430.9,412.3 426.9,425.7 426.9,436.4 424.2,452.4 424.2,464.5 416.2,467.2 409.5,467.2 405.5,471.2 400.1,475.2 392.1,473.8 386.7,468.5 381.4,464.5 388.1,460.5 388.1,449.8 388.1,433.7 386.7,417.7 381.4,407 378.7,400.3 380,390.9"/><polygon points="518.1,510.1 521.4,506.1 526.7,503.4 530.1,508.1 535.4,507.4 538.1,502.7 544.1,501.4 551.5,504.7 554.8,508.1 565.5,508.1 574.9,506.7 585.6,504.7 592.3,500.7 601.6,500.1 607,496.7 617.7,493.4 613.7,504.1 609.6,513.4 607,520.1 605,526.8 607,533.5 610.3,537.5 613,545.5 609,554.9 607,560.9 597.6,558.9 588.2,556.2 583.6,549.5 576.2,546.2 566.9,544.2 556.2,538.8 544.1,532.1 536.1,529.5 525.4,526.8 519.4,522.8 517.4,517.4"/></g></svg>
<svg style="position:absolute;left:0;top:0" width="1200" height="673" viewBox="0 0 1200 673"><g fill="none" stroke="#2a0c10" stroke-width="0.65" stroke-linejoin="round" opacity="0.95"><polyline points="343.6,197.1 349.5,205.4 363.8,203 373.3,200.6 373.3,186.4"/><polyline points="398.3,182.8 393.5,190 397.1,209 392.3,216.1 395.9,225.6 404.2,231.6 411.4,239.9"/><polyline points="367.4,261.3 378.1,258.9 384,247 393.5,244.6 401.8,241.1 411.4,239.9"/><polyline points="411.4,239.9 413.7,225.6 420.9,222.1 435.1,220.9 449.4,228 466.1,226.8 482.7,226.8 494.6,225.6 504.1,229.2"/><polyline points="446.1,149.9 451.3,166.2 447.5,184 450.5,191.5 458.7,192.2 460.2,196"/><polyline points="452,197.4 452,204.8 456.5,215.2 466.9,222.7 474.3,226.4"/><polyline points="450.5,191.5 452,197.4"/><polyline points="460.2,196 466.9,194.4 472.8,185.5 481,184 487.7,178.1 485.4,169.2 492.1,157.3 495.1,155.8"/><polyline points="510,156.5 501,172.1 504,184 513,189.2 518.9,191.5 523.3,195.9"/><polyline points="411.4,239.9 418.5,245.8 428,249.4 436.3,253 439.9,258.9"/><polyline points="428,249.4 439.9,256.5 454.2,261.3 468.4,260.1 477.9,256.5 485.1,266.1 492.2,270.8 501.7,273.2"/><polyline points="501.7,273.2 499.4,285.1 497,300 491.9,313.5"/><polyline points="506.5,268.4 502.3,274.9"/><polyline points="502.3,274.9 515.7,282.3 521.6,292.7 524.6,307.5 533.5,315 524.6,322.4 512.7,329.8 500.8,320.9 491.9,313.5 494.9,295.7 497.8,283.8 502.3,274.9"/><polyline points="480,331.3 491.9,313.5"/><polyline points="533.5,315 552.8,306.1"/><polyline points="533.5,315 530.5,328.4 529,340.2 536.5,349.2 548.4,355.1 558.8,356.6"/><polyline points="558.8,356.6 566.2,349.2 579.6,344.7 582.5,340.2"/><polyline points="582.5,340.2 592.9,346.2 590,358.1 592.9,364"/><polyline points="592.9,364 578.1,367 563.2,367 558.8,370"/><polyline points="558.8,356.6 560.2,364 555.8,372.9 554.3,375.9"/><polyline points="592.9,364 598.9,377.4 610.8,378.9 616.7,377.4"/><polyline points="610.8,378.9 604.8,390.8 610.8,402.6 616.7,413 616.7,422"/><polyline points="616.7,377.4 631.6,381.8 643.4,390.8 649.4,401.2 652.4,402.6"/><polyline points="619.7,423.4 631.6,424.9 643.4,416"/></g><g fill="#b72c3b" stroke="#4a1a22" stroke-width="0.4"><circle cx="527.4" cy="387.4" r="1"/><circle cx="533.6" cy="387.4" r="1"/><circle cx="556.5" cy="397.8" r="1.1"/><circle cx="569" cy="402" r="0.9"/><circle cx="577.6" cy="485.3" r="0.7"/><circle cx="584.2" cy="484" r="0.7"/><circle cx="592.9" cy="483.3" r="0.9"/><circle cx="597.6" cy="488" r="1.1"/><circle cx="604.3" cy="474.7" r="0.7"/><circle cx="504.7" cy="512.1" r="0.8"/><circle cx="513.4" cy="512.1" r="0.8"/><circle cx="503.3" cy="560.2" r="1.3"/><circle cx="539.4" cy="480.7" r="0.6"/><circle cx="429.5" cy="305.3" r="0.8"/><circle cx="437.6" cy="324" r="0.8"/><circle cx="445.6" cy="334.2" r="0.9"/><circle cx="463" cy="333.4" r="0.9"/><circle cx="469" cy="337.4" r="0.9"/><circle cx="534.2" cy="598" r="0.8"/><circle cx="516.5" cy="611.4" r="0.5"/><path d="M438.5 316 L443 314.2 L448.5 315 L447.5 318.2 L441 319.2Z"/></g><path d="M526 617Q523 613 523.5 611L524 612.5Q526 614 527 615V607.5Q527.5 605.5 529 606V612V606Q530 604.5 533 605Q536 605.5 536.5 608V617Q536 621.5 532 621.5Q528.5 621.5 526 617Z" fill="#fff" stroke="#111" stroke-width="1"/><path d="M529 606V613" stroke="#111" stroke-width="1"/></svg>
</body></html>
